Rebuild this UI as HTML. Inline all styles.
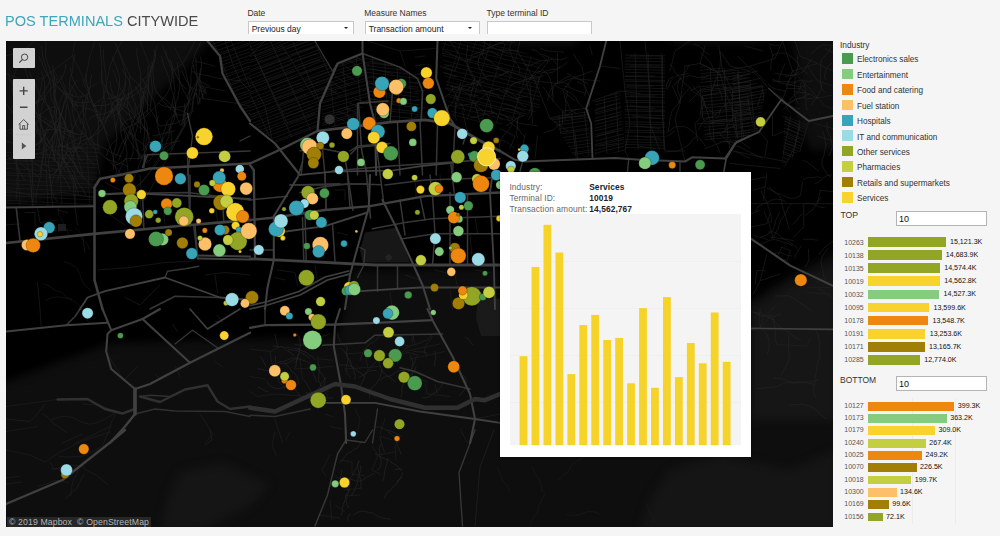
<!DOCTYPE html>
<html><head><meta charset="utf-8">
<style>
html,body{margin:0;padding:0}
body{width:1000px;height:536px;background:#f5f5f5;position:relative;overflow:hidden;font-family:"Liberation Sans",Arial,sans-serif;color:#333}
.abs{position:absolute}
#title{left:5.2px;top:11.5px;font-size:15.5px;line-height:18px;white-space:nowrap;color:#4a4a4a;transform:scaleX(0.94);transform-origin:0 0}
#title span{color:#3fa5ba}
.lbl{font-size:8.5px;line-height:10px;color:#333;white-space:nowrap}
.dd{height:13px;border:1px solid #c8c8c8;border-bottom:none;background:#fff;box-sizing:border-box;font-size:8.5px;line-height:14.6px;padding-left:2.7px;color:#222;white-space:nowrap}
.dd i{position:absolute;right:4.8px;top:5px;width:0;height:0;border-left:2.1px solid transparent;border-right:2.1px solid transparent;border-top:2.5px solid #222}
#map{left:6px;top:41px;width:827px;height:485.6px;background:#0d0d0d;overflow:hidden}
#map svg{position:absolute;left:0;top:0}
.ctl{position:absolute;left:7.3px;width:21.4px;background:#d2d2d2;border-radius:1px}
#attr{position:absolute;left:1px;bottom:0;height:10px;padding:0 2px;background:rgba(60,60,60,.55);color:#b5b5b5;font-size:8.7px;line-height:10px;white-space:nowrap;letter-spacing:.12px}
.sw{position:absolute;left:842px;width:11px;height:10.6px}
.lt{position:absolute;left:857px;margin-top:1.2px;font-size:8.2px;line-height:11px;color:#333;white-space:nowrap}
.inp{position:absolute;left:896px;width:91px;height:14.5px;border:1px solid #b4b4b4;background:#fff;box-sizing:border-box;font-size:9px;line-height:14.6px;padding-left:2px;color:#111}
.bl{position:absolute;left:844.3px;font-size:7px;line-height:9px;color:#555;white-space:nowrap}
.bar{position:absolute;left:868.4px}
.bv{position:absolute;font-size:7.1px;line-height:9px;color:#111;white-space:nowrap}
#tip{left:500px;top:172px;width:251px;height:285px;background:#fff;box-shadow:0 0 2px rgba(0,0,0,.5)}
#tip .r{position:absolute;left:9.4px;font-size:8.4px;letter-spacing:.1px;line-height:10px;color:#666;white-space:nowrap}
#tip .r b{position:absolute;left:79.8px;color:#222}
</style></head><body>
<div id="title" class="abs"><span>POS TERMINALS</span> CITYWIDE</div>
<div class="abs lbl" style="left:247.4px;top:7.6px">Date</div>
<div class="abs dd" style="left:248px;top:21px;width:106px">Previous day<i></i></div>
<div class="abs lbl" style="left:364.2px;top:7.6px">Measure Names</div>
<div class="abs dd" style="left:365px;top:21px;width:115px">Transaction amount<i style="right:7.4px"></i></div>
<div class="abs lbl" style="left:486.5px;top:7.6px">Type terminal ID</div>
<div class="abs dd" style="left:487px;top:21px;width:105px"></div>
<div id="map" class="abs">
<svg width="827" height="486" viewBox="6 41 827 486">
<defs><filter id="bl" filterUnits="userSpaceOnUse" x="-40" y="0" width="920" height="570" color-interpolation-filters="sRGB"><feGaussianBlur stdDeviation="4"/></filter></defs>
<rect x="6" y="41" width="827" height="486" fill="#0e0e0e"/>
<polygon filter="url(#bl)" fill="#000" points="222,30 500,36 505,45 575,45 580,36 670,36 675,44 750,44 790,36 800,75 795,110 810,150 838,150 838,250 790,275 751,300 600,300 500,300 500,268 352,270 337,337 110,343 0,384 0,205 94,190 104,146 160,92"/>
<polygon fill="#171717" points="365,232.5 397.5,227.5 410,262.5 362.5,262.5 360,250"/>
<polygon fill="#242424" points="388.7,253.5 392.7,257.5 388.7,261.5 384.7,257.5"/>
<polygon fill="#1a1a1a" points="478,297 500,299 500,336 481,336 476,318"/>
<circle cx="329.6" cy="119.4" r="5" fill="#333"/>
<rect x="58" y="224" width="8" height="7" fill="#1e1e1e"/>
<polygon filter="url(#bl)" fill="#151515" points="180,472 222,463 269,484 252,505 201,530 160,530 168,497"/>
<polygon filter="url(#bl)" fill="#151515" points="670,470 720,455 790,470 838,450 838,530 640,530 650,500"/>
<polygon filter="url(#bl)" fill="#161616" points="751,310 790,285 838,262 838,420 751,420"/>
<g fill="none" stroke="#232323" stroke-width="0.6"><polyline points="75.0,54.4 73.3,60.2 73.0,66.2 72.4,72.1 70.4,77.8 69.4,83.7 69.7,89.7 70.3,95.7 71.8,101.5 73.1,107.3"/><polyline points="69.4,83.7 72.3,87.7 74.9,92.0 77.1,96.5"/><polyline points="20.8,93.1 24.0,98.2 26.2,103.8 29.0,109.1 32.8,113.7 37.5,117.4 42.6,120.7 47.0,124.7 52.1,127.9 57.0,131.3 61.6,135.1 66.5,138.6"/><polyline points="42.6,120.7 47.0,123.0 51.0,126.0 55.1,128.8 59.7,130.9 64.1,133.3 68.5,135.5 73.3,137.0"/><polyline points="172.4,103.2 174.2,109.0 175.9,114.7 178.1,120.3 180.5,125.8"/><polyline points="175.9,114.7 171.5,117.0 168.0,120.7 166.0,125.2 164.8,130.1 162.9,134.7 162.6,139.7 161.5,144.5"/><polyline points="72.1,92.4 72.1,98.4 72.4,104.4 72.2,110.4 73.5,116.3 75.0,122.1 77.6,127.5 81.2,132.3 85.9,136.0 90.0,140.4 94.9,143.9 100.3,146.6 105.8,149.0 110.6,152.5 116.2,154.7 121.8,156.8"/><polyline points="85.9,136.0 81.1,137.2 76.5,139.3 72.1,141.7 68.0,144.5 63.3,146.0 58.3,145.7"/><polyline points="39.2,56.7 41.9,62.1 43.5,67.8 46.2,73.2 49.4,78.3 53.6,82.5 57.7,86.9 61.6,91.5 65.9,95.7 70.9,99.0 75.2,103.1 78.4,108.2"/><polyline points="57.7,86.9 61.5,90.2 65.6,93.1 70.3,94.7 74.9,96.7 79.9,97.1 84.7,95.7 89.1,93.3"/><polyline points="41.6,71.3 43.2,77.0 44.7,82.8 44.8,88.8 44.4,94.8 45.5,100.7 47.5,106.4 49.9,111.9 51.9,117.5"/><polyline points="44.4,94.8 41.8,99.1 38.0,102.4 33.3,104.1 28.6,105.9 24.0,107.7 20.2,111.0"/><polyline points="29.2,71.5 31.2,77.1 34.7,82.0 36.9,87.6 39.0,93.2 42.1,98.3 45.1,103.5 49.4,107.7 53.6,112.0 56.5,117.3 58.3,123.0 59.5,128.9 61.4,134.6 63.8,140.1 67.1,145.1 69.6,150.5 72.1,156.0 73.6,161.8 75.7,167.4 78.7,172.6"/><polyline points="58.3,123.0 61.9,126.5 66.1,129.2 70.3,131.9 74.8,134.1 79.8,134.5 84.5,133.1"/><polyline points="65.8,64.1 65.2,70.0 63.2,75.7 59.7,80.5 55.0,84.4 50.7,88.5 47.1,93.3 44.3,98.6 42.4,104.3 41.4,110.2 40.1,116.1 37.5,121.5 33.9,126.3 30.3,131.1"/><polyline points="44.3,98.6 39.5,100.2 35.5,103.1 31.7,106.4"/><polyline points="155.3,58.7 152.8,64.2 150.8,69.8 147.8,75.1 143.6,79.4 139.7,83.9 136.0,88.6 131.3,92.3 126.1,95.4 121.6,99.3 118.0,104.2 115.4,109.6 111.7,114.3 107.2,118.2 103.6,123.0"/><polyline points="131.3,92.3 128.4,96.4 125.3,100.4 124.0,105.2 121.5,109.5 118.3,113.4"/><polyline points="29.3,107.7 29.7,113.7 31.1,119.5 33.2,125.1 36.0,130.4 39.6,135.3 42.9,140.3 46.8,144.8 51.0,149.1 55.9,152.5 60.0,156.9 64.4,161.0"/><polyline points="42.9,140.3 39.2,143.6 34.6,145.6 30.0,147.5 25.3,149.4 20.7,151.1 17.0,154.5 13.5,158.1"/><polyline points="45.9,41.3 45.9,47.3 45.4,53.3 46.2,59.3 48.5,64.8 50.1,70.6 51.7,76.4 53.3,82.2 54.0,88.1 53.4,94.1 54.3,100.0"/><polyline points="50.1,70.6 53.2,74.6 56.1,78.7 58.0,83.3"/><polyline points="196.9,80.4 196.1,86.4 196.2,92.4 197.2,98.3 198.1,104.2"/><polyline points="196.2,92.4 193.9,96.8 192.6,101.6 192.1,106.6 193.2,111.5"/><polyline points="168.8,124.6 169.4,130.6 168.7,136.5 166.5,142.1 165.2,148.0 149.3,172.8 145.5,177.5 141.9,182.3 138.3,187.1 135.1,192.2"/><polyline points="99.2,42.6 100.6,48.4 100.4,54.4 101.5,60.3 101.3,66.3 101.9,72.3 101.3,78.3 102.1,84.2 103.6,90.0 103.8,96.0 105.1,101.9 105.5,107.9 104.8,113.8 103.0,119.5 100.6,125.1 97.0,129.8 93.5,134.7 90.0,139.6"/><polyline points="103.8,96.0 100.5,99.7 96.3,102.5 93.0,106.2"/><polyline points="193.3,64.9 194.3,70.8 196.7,76.4 197.9,82.2 200.5,87.7 201.9,93.5 203.5,99.3"/><polyline points="197.9,82.2 194.0,85.4 190.8,89.2 189.0,93.9"/><polyline points="41.4,45.5 42.2,51.4 43.0,57.4 44.6,63.1 46.5,68.9 47.8,74.7 49.8,80.4 50.9,86.3 50.3,92.2 51.2,98.2 53.7,103.6 56.2,109.1 57.1,115.0"/><polyline points="49.8,80.4 48.2,85.1 45.4,89.2 42.9,93.5 40.4,97.9 36.8,101.4 33.5,105.1"/><polyline points="112.9,102.2 111.9,108.1 109.6,113.7 106.7,118.9 104.9,124.6 101.6,129.6 97.0,133.6 91.9,136.6 87.7,140.9 83.2,144.9 78.0,147.9 72.9,151.1 68.8,155.4 64.2,159.3"/><polyline points="91.9,136.6 87.4,138.9 82.7,140.4 78.8,143.6 75.8,147.6 73.6,152.1"/><polyline points="8.7,73.4 10.1,79.3 12.8,84.6 14.4,90.4 16.9,95.9 20.2,100.8 24.1,105.4 28.9,109.0 34.1,112.0 39.0,115.4 44.4,118.1 49.2,121.6 54.8,123.9 59.8,127.2 65.4,129.4 70.9,131.8 76.5,133.9"/><polyline points="34.1,112.0 32.4,116.7 29.1,120.5 24.9,123.2 21.6,126.9"/><polyline points="192.8,110.8 144.9,199.8 139.0,200.8 133.0,201.2"/><polyline points="151.5,61.5 153.0,67.3 153.0,73.3 153.4,79.3 153.9,85.2 155.9,90.9 159.4,95.8 162.7,100.8 166.7,105.2 171.3,109.1 176.0,112.9"/><polyline points="155.9,90.9 158.9,94.9 162.9,97.8 167.0,100.8 170.3,104.5 173.8,108.1 176.2,112.4 177.4,117.3"/><polyline points="56.6,108.3 56.1,114.3 55.7,120.3 55.6,126.3 55.7,132.3 55.1,138.3 53.6,144.1 51.7,149.8 49.4,155.3 48.5,161.2 48.7,167.2 49.8,173.1 50.0,179.1 50.9,185.1 51.6,191.0 53.8,196.6 57.4,201.4"/><polyline points="49.4,155.3 52.8,159.0 56.7,162.1 60.7,165.0 64.1,168.8 65.7,173.5"/><polyline points="121.7,68.7 124.8,73.8 128.2,78.8 130.5,84.3 131.4,90.3 132.4,96.2 134.1,101.9 136.8,107.3 138.1,113.2 140.3,118.8 142.2,124.4 145.2,129.6 148.2,134.8 149.8,140.6 152.5,146.0 154.2,151.7"/><polyline points="138.1,113.2 134.4,116.6 129.9,118.7 125.4,120.9 122.0,124.5 120.3,129.2"/><polyline points="109.8,81.1 110.9,87.0 112.4,92.8 115.1,98.2 118.3,103.3 122.0,108.0 126.1,112.4 130.4,116.5 133.6,121.6 137.6,126.1 142.7,129.3"/><polyline points="122.0,108.0 119.3,112.2 115.2,115.1 110.9,117.6"/><polyline points="82.7,79.1 84.3,84.9 87.4,90.0 89.9,95.5 92.1,101.1 95.3,106.1 97.0,111.9 99.0,117.6 101.5,123.0"/><polyline points="92.1,101.1 87.3,102.5 82.3,102.7 77.3,102.4 72.7,100.5 69.0,97.1 65.5,93.6"/><polyline points="157.0,45.4 155.6,51.2 155.5,57.2 154.1,63.1 152.7,68.9 150.1,74.3 147.3,79.6 145.6,85.4 144.1,91.2 143.3,97.1 143.4,103.1 142.6,109.1 141.4,115.0 140.4,120.9 140.4,126.9 140.4,132.9"/><polyline points="144.1,91.2 142.9,96.1 141.8,100.9 139.5,105.4 137.0,109.7"/><polyline points="101.8,70.6 101.9,76.6 103.0,82.5 105.5,88.0 108.4,93.2 112.5,97.7 117.1,101.5 122.2,104.6 127.2,107.9 131.4,112.3 134.9,117.1 138.6,121.8 142.6,126.3 146.5,130.9 150.7,135.1"/><polyline points="122.2,104.6 118.7,108.2 114.2,110.2 110.4,113.5 106.7,116.8 102.6,119.7 97.9,121.3"/><polyline points="52.7,65.1 53.3,71.1 54.1,77.0 55.5,82.9 55.8,88.9 54.7,94.7 54.7,100.7 55.0,106.7 54.4,112.7 52.8,118.5 49.8,123.7 46.8,128.9 45.1,134.6 42.1,139.8 37.9,144.1"/><polyline points="55.0,106.7 50.2,108.0 45.7,110.3 42.1,113.8 37.5,115.7"/><polyline points="30.5,114.5 28.4,120.1 27.6,126.0 26.0,131.8 25.9,137.8 27.1,143.7 28.1,149.6 30.6,155.0 32.4,160.8 32.7,166.8 32.5,172.8 32.3,178.8 32.2,184.8 31.3,190.7 31.7,196.7 32.8,202.6"/><polyline points="32.4,160.8 27.4,161.3 22.4,161.2 17.7,159.7 12.9,158.2 7.9,157.8"/><polyline points="59.1,126.5 59.8,132.5 61.4,138.2 61.8,144.2 61.7,150.2 62.9,156.1 65.1,161.7 67.5,167.2 70.2,172.5 73.0,177.8 75.2,183.4 76.7,189.2 78.7,194.9"/><polyline points="65.1,161.7 61.5,165.1 57.8,168.6 55.1,172.8 51.0,175.6 47.4,179.1"/><polyline points="177.7,61.5 177.6,67.5 178.8,73.4 179.5,79.4 179.9,85.4 179.0,91.3 178.1,97.2 175.9,102.8 175.1,108.7 174.0,114.6 171.6,120.1 170.5,126.0 171.1,132.0 171.4,138.0 171.9,144.0 171.8,150.0"/><polyline points="175.1,108.7 179.9,110.1 184.6,111.9 189.1,113.9"/><polyline points="158.2,115.7 157.2,121.6 158.0,127.6 159.4,133.4 161.4,139.1 161.8,145.0 163.5,150.8"/><polyline points="159.4,133.4 155.8,136.8 152.3,140.4 148.4,143.5 145.2,147.4 141.7,150.9"/><polyline points="91.8,74.4 90.5,80.3 90.1,86.3 88.8,92.1 86.3,97.6 84.3,103.2 83.0,109.1 80.2,114.4 77.1,119.6 74.8,125.1 71.7,130.3 69.3,135.7 67.5,141.5 67.4,147.5 66.4,153.4 64.1,158.9 61.3,164.3 57.4,168.8 54.7,174.1 52.9,179.9 51.2,185.6"/><polyline points="71.7,130.3 66.9,131.6 61.9,131.3 57.2,129.7 52.2,129.6 47.2,129.5 42.5,131.3"/><polyline points="200.7,68.0 199.6,73.9 199.0,79.9 199.0,85.9 199.5,91.8 199.0,97.8 200.0,103.7"/><polyline points="199.0,85.9 203.0,88.8 205.6,93.1"/><polyline points="111.2,104.2 112.6,110.0 114.2,115.8 114.5,121.8 115.6,127.7 116.7,133.6 116.8,139.6 116.0,145.5 114.3,151.3 113.3,157.2 113.1,163.2 113.6,169.2"/><polyline points="116.8,139.6 112.9,142.7 109.9,146.7 107.8,151.3 106.5,156.1"/><polyline points="195.9,57.8 196.0,63.8 196.2,69.7 197.2,75.7 197.2,81.7 196.7,87.6 194.6,93.3 193.8,99.2 193.1,105.2 191.3,110.9 188.5,116.2 184.5,120.7 181.8,126.0"/><polyline points="194.6,93.3 192.7,97.9 189.3,101.5 185.5,104.8"/><polyline points="200.5,74.1 198.7,79.8 196.0,85.2 192.8,90.3 191.1,96.0 189.0,101.6 186.2,107.0 183.9,112.5 183.1,118.5 182.9,124.5"/><polyline points="189.0,101.6 186.6,106.1 184.9,110.8 184.4,115.7 182.7,120.4 180.9,125.1"/><polyline points="21.1,50.0 22.7,55.8 24.1,61.6 25.1,67.5 26.4,73.4 28.5,79.0 28.9,85.0 28.8,91.0 28.9,97.0 30.6,102.8 31.4,108.7 31.0,114.7 30.8,120.7 32.3,126.5 32.8,132.5 32.4,138.5 31.4,144.4"/><polyline points="28.9,97.0 24.1,98.4 19.4,100.0 15.3,102.9 12.3,106.9"/><polyline points="26.7,92.4 28.4,98.2 31.6,103.3 34.6,108.5 37.2,113.9 38.5,119.7 41.1,125.1 43.3,130.7 45.9,136.1 48.5,141.5 52.2,146.3 56.3,150.6 60.5,155.0 63.4,160.2 67.5,164.6 71.5,169.0 74.8,174.1 76.6,179.8 79.4,185.1 83.2,189.7 85.8,195.2"/><polyline points="52.2,146.3 47.9,148.9 43.8,151.8 39.1,153.3 34.2,154.4 29.2,154.1 24.3,155.2 19.3,155.2"/><polyline points="54.0,77.0 53.6,83.0 54.1,89.0 55.0,94.9 55.9,100.8 57.1,106.7 59.5,112.2 62.7,117.3 65.2,122.7 66.4,128.6 69.1,134.0 71.6,139.4 73.3,145.2 76.4,150.3 78.5,155.9 81.8,161.0"/><polyline points="65.2,122.7 61.1,125.7 57.5,129.2 54.7,133.3 52.3,137.7 50.4,142.3"/><polyline points="112.2,56.9 114.4,62.5 116.7,68.0 118.7,73.7 119.6,79.7 119.3,85.6 118.1,91.5 117.2,97.4 117.7,103.4 118.7,109.3 120.1,115.2 120.6,121.1 121.0,127.1 120.9,133.1 122.3,139.0 124.9,144.4"/><polyline points="117.7,103.4 114.7,107.5 111.0,110.8 106.5,112.9 101.7,114.4 96.7,114.7 92.2,116.9 88.7,120.5"/><polyline points="135.1,102.6 135.1,108.6 135.2,114.6 133.7,120.5 130.9,125.8 129.2,131.5 126.6,136.9 122.7,141.5 120.1,146.9 117.9,152.5 115.0,157.7"/><polyline points="129.2,131.5 133.1,134.7 136.0,138.8 139.9,141.9 143.8,145.0 146.5,149.2"/><polyline points="112.7,69.4 115.0,75.0 116.7,80.7 119.2,86.2 122.2,91.4 125.6,96.3 128.1,101.8 131.2,106.9 133.6,112.4 137.3,117.1 140.0,122.5"/><polyline points="125.6,96.3 121.4,99.1 116.6,100.4 112.1,102.7 107.6,104.8 102.7,105.6 97.7,105.4 92.7,105.8"/><polyline points="85.8,73.8 86.4,79.8 87.2,85.8 89.0,91.5 90.1,97.4 92.6,102.8 94.0,108.6 96.3,114.2 98.1,119.9 98.4,125.9 98.3,131.9 97.7,137.9 97.8,143.9 99.4,149.6"/><polyline points="96.3,114.2 98.9,118.5 101.7,122.6 104.4,126.8 105.8,131.6 108.4,135.8"/><polyline points="55.0,99.1 56.8,104.9 59.2,110.4 61.5,115.9 63.7,121.5 66.1,127.0 69.2,132.1 73.2,136.6 77.6,140.7"/><polyline points="63.7,121.5 59.6,124.4 56.2,128.1 54.0,132.6"/><polyline points="27.8,97.8 27.0,103.7 25.2,109.5 22.0,114.5 20.1,120.2 17.3,125.5 13.3,130.0 9.1,134.3"/><polyline points="20.1,120.2 22.8,124.4 25.0,128.9 26.7,133.6 28.7,138.2"/><polyline points="134.9,86.3 138.1,91.4 140.1,97.0 141.2,102.9 141.6,108.9 143.5,114.6 144.4,120.5 144.5,126.5 144.6,132.5 144.0,138.5 143.5,144.4 143.9,150.4 145.6,156.2 148.2,161.6"/><polyline points="144.5,126.5 146.9,130.8 148.7,135.5 148.9,140.5 147.2,145.2 146.3,150.1 143.8,154.5 140.1,157.8"/><polyline points="25.7,86.2 25.9,92.2 27.1,98.0 29.5,103.6 30.5,109.5 32.4,115.1 34.8,120.7 36.8,126.3 39.2,131.8 40.5,137.7 40.3,143.7 38.6,149.4"/><polyline points="34.8,120.7 30.7,123.6 26.0,125.3 21.4,127.2 16.5,128.3 11.6,129.1 6.8,130.6"/><polyline points="136.9,47.9 136.7,53.9 137.9,59.8 138.6,65.8 140.4,71.5 140.7,77.5 140.3,83.5 141.5,89.3 143.8,94.9 145.7,100.6 148.9,105.6"/><polyline points="140.7,77.5 143.8,81.4 145.9,85.9 149.1,89.8"/><polyline points="205.6,88.5 203.6,94.2 200.2,99.1 198.0,104.7"/><polyline points="66.5,104.7 66.1,110.7 65.5,116.7 64.8,122.6 64.9,128.6 64.2,134.6 62.5,140.3 62.4,146.3 62.2,152.3 63.4,158.2 64.7,164.1 67.4,169.5 69.8,174.9 71.7,180.6"/><polyline points="62.4,146.3 66.9,148.6 71.9,148.9 76.8,148.0 81.8,148.2 86.4,150.2"/><polyline points="161.6,56.1 162.7,62.0 164.6,67.7 167.1,73.1 169.1,78.8 170.5,84.6 171.8,90.5 173.9,96.1 175.2,102.0 175.4,108.0 175.2,114.0 174.3,119.9 171.8,125.3 168.7,130.5 165.2,135.4 162.2,140.6 160.1,146.2 156.5,151.0 149.6,160.7 144.5,163.8"/><polyline points="175.2,114.0 180.0,115.2 185.0,115.0 189.8,113.5"/><polyline points="70.5,67.5 71.0,73.4 72.8,79.2 75.5,84.5 78.5,89.7 82.8,93.9 87.3,97.9 91.1,102.6 94.3,107.6 97.6,112.7"/><polyline points="82.8,93.9 80.0,98.1 76.5,101.7 74.7,106.3 73.8,111.3"/><polyline points="184.5,103.4 184.4,109.4 185.3,115.3 185.3,121.3 184.1,127.2 171.5,147.3 167.0,151.2 148.2,174.4 144.5,179.1 140.2,183.3 135.7,187.2 131.7,191.7"/><polyline points="200.6,57.3 201.5,63.2 201.4,69.2 199.9,75.0 199.8,81.0 200.4,87.0 202.0,92.8 202.9,98.7"/><polyline points="199.8,81.0 202.4,85.3 204.6,89.8 206.3,94.5"/><polyline points="60.3,75.0 62.3,80.6 64.7,86.1 66.3,91.9 68.5,97.5 71.4,102.8 75.0,107.5 78.0,112.7 79.6,118.5 81.2,124.3"/><polyline points="71.4,102.8 75.9,104.9 80.8,105.8 85.2,108.3 90.1,109.1 94.7,111.1 99.6,112.0"/><polyline points="140.9,105.1 140.1,111.1 138.8,116.9 136.5,122.5 133.3,127.5 130.1,132.6 127.6,138.1 124.9,143.4 123.4,149.2 120.8,154.7 118.7,160.3"/><polyline points="130.1,132.6 132.6,137.0 133.2,142.0 133.1,147.0 133.1,152.0 131.8,156.8 129.5,161.2"/><polyline points="82.1,99.2 83.1,105.2 83.6,111.1 83.6,117.1 84.1,123.1 83.1,129.0 81.0,134.6 80.3,140.6 78.5,146.3 75.5,151.5 71.7,156.2 69.0,161.5 65.3,166.2 61.2,170.6 58.5,176.0 57.3,181.9"/><polyline points="78.5,146.3 82.2,149.8 85.5,153.5 87.8,158.0 91.0,161.7 94.4,165.4"/><polyline points="170.5,59.6 172.0,65.4 172.2,71.4 172.0,77.4 170.9,83.3 169.3,89.0 166.4,94.3 162.8,99.0 158.3,103.0 154.5,107.7 150.2,111.9 145.9,116.1 141.1,119.6 136.3,123.3 130.9,125.9 125.5,128.4 120.4,131.5"/><polyline points="158.3,103.0 162.5,105.7 167.4,106.8 172.3,107.7 177.2,107.2 182.2,106.7 187.2,106.2"/><polyline points="119.7,117.8 121.8,123.4 123.8,129.1 125.2,134.9 125.4,140.9 126.1,146.9 127.1,152.8 126.5,158.8 127.3,164.7 127.7,170.7 127.6,176.7 129.1,182.5 130.3,188.4 130.8,194.4"/><polyline points="126.5,158.8 122.3,161.5 118.1,164.3 113.3,165.6"/><polyline points="15.0,104.9 15.9,110.9 16.2,116.9 17.0,122.8 16.9,128.8 16.6,134.8 15.0,140.6 14.0,146.5 13.6,152.5 14.0,158.5 15.9,164.1 18.5,169.6 21.5,174.8 24.5,180.0"/><polyline points="47.8,104.5 50.6,109.8 51.9,115.6 53.5,121.4 54.9,127.2 56.7,133.0 58.2,138.8 60.0,144.5 63.0,149.7 67.2,154.0 70.6,158.9 74.1,163.8 76.8,169.2 80.7,173.7 84.6,178.3 88.4,182.9 92.5,187.3 97.4,190.7 102.0,194.7"/><polyline points="67.2,154.0 69.7,158.3 73.3,161.8 76.3,165.8 78.1,170.4 80.2,175.0 83.6,178.7"/><polyline points="200.6,42.2 198.2,47.7 195.5,53.1 193.6,58.8 192.4,64.6 191.4,70.5 191.0,76.5 190.9,82.5 190.2,88.5 188.2,94.1 187.6,100.1"/><polyline points="191.4,70.5 195.4,73.5 198.2,77.6 201.2,81.6 205.5,84.2 210.0,86.4"/><polyline points="125.8,81.1 125.2,87.1 123.8,92.9 121.8,98.6 120.9,104.5 119.2,110.3 118.2,116.2 116.9,122.0 115.7,127.9"/><polyline points="120.9,104.5 116.2,106.2 112.5,109.6 110.4,114.1"/><polyline points="142.7,113.7 145.0,119.3 147.0,124.9 147.6,130.9 147.0,136.9 146.0,142.8 145.6,148.8 143.8,154.5 141.3,159.9 138.8,165.4 137.4,171.2 134.6,176.5 132.9,182.3"/><polyline points="65.9,96.3 64.2,102.1 63.1,108.0 61.6,113.8 58.6,119.0 54.7,123.6 50.5,127.9 46.9,132.6 43.4,137.5 38.9,141.6 34.8,145.9 30.2,149.8 25.4,153.4 20.0,155.8 14.1,157.3 8.6,159.5"/><polyline points="43.4,137.5 45.4,142.1 46.1,147.0 46.5,152.0 47.7,156.9"/><polyline points="184.2,112.8 183.9,118.8 185.1,124.7"/><polyline points="103.2,48.8 103.3,54.8 103.9,60.8 104.3,66.8 105.6,72.6 105.7,78.6 106.5,84.6 107.2,90.5 108.9,96.3 111.5,101.7 115.2,106.4 118.1,111.6 121.6,116.5 124.9,121.5 128.6,126.3 131.5,131.5 133.3,137.3 135.8,142.7 137.1,148.5 138.3,154.4 138.4,160.4"/><polyline points="115.2,106.4 112.4,110.5 109.2,114.4 106.6,118.6"/><polyline points="115.5,42.8 117.5,48.5 119.2,54.2 121.8,59.7 123.4,65.5 125.2,71.2 125.6,77.2 125.1,83.1 123.6,88.9 120.6,94.1 118.3,99.7 117.6,105.6 117.8,111.6 119.1,117.5 121.7,122.9 125.6,127.5 129.4,132.2 132.1,137.5"/><polyline points="120.6,94.1 116.1,96.5 111.5,98.3 106.5,98.5"/><polyline points="154.2,49.0 154.5,55.0 153.3,60.9 151.5,66.6 150.0,72.4 148.8,78.3 148.6,84.3 147.0,90.0 143.8,95.1 141.4,100.6 140.5,106.6 140.5,112.6"/><polyline points="148.6,84.3 144.8,87.5 140.3,89.7 136.9,93.3 132.7,96.0 128.1,98.0 123.3,99.4 118.3,98.9"/><polyline points="19.5,53.9 17.9,59.7 16.9,65.6 15.6,71.4 13.5,77.1 12.7,83.0 12.4,89.0 13.0,95.0 14.8,100.7 16.7,106.4 19.6,111.6 23.2,116.4"/><polyline points="12.4,89.0 16.8,91.4 20.2,95.0 22.6,99.4"/><polyline points="40.5,115.1 41.0,121.1 40.3,127.0 40.7,133.0 41.3,139.0 43.3,144.7 43.8,150.7 43.2,156.6 42.2,162.5 41.3,168.5 40.9,174.5 39.5,180.3 38.2,186.1 36.4,191.9 35.8,197.8 36.2,203.8"/><polyline points="42.2,162.5 46.2,165.4 50.5,168.1 55.3,169.4 60.3,169.9"/><polyline points="181.8,70.8 184.4,76.2 187.2,81.5 190.0,86.8 193.7,91.5 197.5,96.2 200.8,101.1"/><polyline points="190.0,86.8 194.5,88.9 199.2,90.6 204.2,91.1"/><polyline points="26.1,95.2 27.2,101.1 29.5,106.6 31.2,112.4 32.5,118.2 34.8,123.8 37.7,129.0 41.9,133.3 45.6,138.0 49.3,142.8 52.0,148.1 53.4,154.0 54.7,159.8"/><polyline points="37.7,129.0 35.9,133.7 34.4,138.4 32.0,142.8 30.9,147.7 29.2,152.4 28.4,157.3"/><polyline points="124.6,128.7 126.9,134.3 128.9,139.9 132.4,144.8 135.8,149.7 139.4,154.5 143.0,159.4 147.4,163.4"/><polyline points="135.8,149.7 139.2,153.4 143.4,156.2 148.2,157.5"/><polyline points="59.8,113.7 60.4,119.7 60.1,125.7 60.7,131.7 60.1,137.6 59.0,143.6 58.1,149.5 58.0,155.5 58.2,161.5 58.8,167.4"/><polyline points="59.0,143.6 63.5,145.8 68.1,147.9 72.4,150.2"/><polyline points="165.6,50.8 167.1,56.6 169.4,62.2 172.5,67.3 175.1,72.7 177.9,78.0 180.9,83.2 182.6,89.0 185.7,94.1 188.4,99.4 190.6,105.0"/><polyline points="177.9,78.0 180.3,82.4 183.3,86.4 187.1,89.7"/><polyline points="77.4,79.8 73.9,84.7 71.0,89.9 68.4,95.3 65.6,100.6 63.3,106.2 62.2,112.1 60.4,117.8 59.2,123.7 56.8,129.2 53.8,134.4 52.4,140.2 52.3,146.2 53.3,152.2 54.8,158.0 57.3,163.4 59.2,169.1 62.0,174.4 65.0,179.6 68.4,184.6 70.2,190.3"/><polyline points="53.8,134.4 51.4,138.8 48.5,142.8 46.4,147.4"/><polyline points="148.4,65.3 147.9,71.3 148.1,77.3 148.3,83.3 148.7,89.3 147.6,95.2 147.2,101.2 147.5,107.2 147.2,113.2"/><polyline points="148.7,89.3 149.8,94.2 152.4,98.4 154.7,102.9 155.3,107.8 156.2,112.8 157.0,117.7 156.3,122.6"/><polyline points="81.0,117.7 82.7,123.5 85.1,129.0 86.2,134.9 88.3,140.5 91.7,145.4 96.3,149.3 100.8,153.3 105.1,157.5 109.6,161.4 113.9,165.6 118.1,169.9 121.4,174.9 125.1,179.7 128.0,184.9 131.0,190.1 132.4,195.9"/><polyline points="105.1,157.5 109.4,160.0 114.1,161.5 118.8,163.4 123.7,164.4 128.1,166.7"/><polyline points="27.7,117.2 26.7,123.1 25.3,129.0 23.4,134.7 20.9,140.1 18.7,145.7 17.8,151.6 17.1,157.6 16.3,163.5 16.8,169.5 17.6,175.5 16.8,181.4 17.2,187.4 16.3,193.3 16.3,199.3"/><polyline points="17.1,157.6 19.9,161.8 23.2,165.5 27.0,168.7 31.2,171.5 35.3,174.4 39.1,177.6"/></g>
<clipPath id="h1"><polygon points="250.0,41.0 313.8,41.0 333.8,69.8 321.2,101.0 317.5,129.8 277.5,142.2 250.0,122.2"/></clipPath><g clip-path="url(#h1)" stroke="#262626" stroke-width="0.5" fill="none"><path d="M250.0 5.5L333.8 -26.3"/><path d="M250.0 8.3L333.8 -23.6"/><path d="M250.0 12.1L333.8 -19.7"/><path d="M250.0 15.3L333.8 -16.6"/><path d="M250.0 18.5L333.8 -13.4"/><path d="M250.0 22.0L333.8 -9.9"/><path d="M250.0 24.7L333.8 -7.1"/><path d="M250.0 27.5L333.8 -4.3"/><path d="M250.0 30.7L333.8 -1.2"/><path d="M250.0 34.9L333.8 3.1"/><path d="M250.0 38.4L333.8 6.6"/><path d="M250.0 40.1L333.8 8.3"/><path d="M250.0 44.0L333.8 12.2"/><path d="M250.0 47.1L333.8 15.3"/><path d="M250.0 50.3L333.8 18.5"/><path d="M250.0 53.8L333.8 22.0"/><path d="M250.0 56.6L333.8 24.7"/><path d="M250.0 60.4L333.8 28.6"/><path d="M250.0 62.5L333.8 30.7"/><path d="M250.0 66.8L333.8 35.0"/><path d="M250.0 70.3L333.8 38.5"/><path d="M250.0 72.0L333.8 40.1"/><path d="M250.0 75.8L333.8 44.0"/><path d="M250.0 79.0L333.8 47.1"/><path d="M250.0 83.2L333.8 51.4"/><path d="M250.0 85.7L333.8 53.9"/><path d="M250.0 88.4L333.8 56.6"/><path d="M250.0 92.3L333.8 60.5"/><path d="M250.0 94.4L333.8 62.5"/><path d="M250.0 98.6L333.8 66.8"/><path d="M250.0 102.1L333.8 70.3"/><path d="M250.0 104.9L333.8 73.0"/><path d="M250.0 107.7L333.8 75.9"/><path d="M250.0 110.8L333.8 79.0"/><path d="M250.0 115.1L333.8 83.3"/><path d="M250.0 117.5L333.8 85.7"/><path d="M250.0 120.3L333.8 88.4"/><path d="M250.0 124.1L333.8 92.3"/><path d="M250.0 127.3L333.8 95.4"/><path d="M250.0 130.5L333.8 98.7"/><path d="M250.0 134.0L333.8 102.2"/><path d="M250.0 136.7L333.8 104.9"/><path d="M250.0 139.5L333.8 107.7"/><path d="M250.0 142.7L333.8 110.8"/><path d="M250.0 146.9L333.8 115.1"/><path d="M250.0 150.4L333.8 118.6"/><path d="M250.0 152.1L333.8 120.3"/><path d="M250.0 156.0L333.8 124.2"/><path d="M250.0 159.1L333.8 127.3"/><path d="M250.0 162.3L333.8 130.5"/><path d="M250.0 165.8L333.8 134.0"/><path d="M250.0 168.6L333.8 136.7"/><path d="M250.0 172.4L333.8 140.6"/><path d="M250.0 174.5L333.8 142.7"/><path d="M204.4 41.0L250.0 142.2"/><path d="M226.4 41.0L272.0 142.2"/><path d="M248.4 41.0L294.0 142.2"/><path d="M270.4 41.0L316.0 142.2"/><path d="M292.4 41.0L338.0 142.2"/><path d="M314.4 41.0L360.0 142.2"/><path d="M336.4 41.0L382.0 142.2"/><path d="M358.4 41.0L404.0 142.2"/></g>
<clipPath id="h2"><polygon points="337.5,64.8 361.2,54.8 368.8,103.5 357.5,103.5 357.5,123.5 322.5,128.5 321.2,103.5"/></clipPath><g clip-path="url(#h2)" stroke="#262626" stroke-width="0.5" fill="none"><path d="M321.2 36.8L368.8 22.6"/><path d="M321.2 39.6L368.8 25.3"/><path d="M321.2 43.5L368.8 29.2"/><path d="M321.2 46.6L368.8 32.3"/><path d="M321.2 49.8L368.8 35.6"/><path d="M321.2 53.3L368.8 39.1"/><path d="M321.2 56.0L368.8 41.8"/><path d="M321.2 58.9L368.8 44.6"/><path d="M321.2 62.0L368.8 47.7"/><path d="M321.2 66.3L368.8 52.0"/><path d="M321.2 69.8L368.8 55.5"/><path d="M321.2 71.4L368.8 57.2"/><path d="M321.2 75.3L368.8 61.1"/><path d="M321.2 78.4L368.8 64.2"/><path d="M321.2 81.7L368.8 67.4"/><path d="M321.2 85.2L368.8 70.9"/><path d="M321.2 87.9L368.8 73.6"/><path d="M321.2 91.8L368.8 77.5"/><path d="M321.2 93.8L368.8 79.6"/><path d="M321.2 98.1L368.8 83.9"/><path d="M321.2 101.6L368.8 87.4"/><path d="M321.2 103.3L368.8 89.0"/><path d="M321.2 107.2L368.8 92.9"/><path d="M321.2 110.3L368.8 96.0"/><path d="M321.2 114.6L368.8 100.3"/><path d="M321.2 117.0L368.8 102.8"/><path d="M321.2 119.7L368.8 105.5"/><path d="M321.2 123.6L368.8 109.4"/><path d="M321.2 125.7L368.8 111.4"/><path d="M321.2 130.0L368.8 115.7"/><path d="M321.2 133.5L368.8 119.2"/><path d="M321.2 136.2L368.8 121.9"/><path d="M321.2 139.0L368.8 124.8"/><path d="M321.2 142.1L368.8 127.9"/><path d="M313.9 54.8L321.2 128.5"/><path d="M327.9 54.8L335.2 128.5"/><path d="M341.9 54.8L349.2 128.5"/><path d="M355.9 54.8L363.2 128.5"/><path d="M369.9 54.8L377.2 128.5"/></g>
<clipPath id="h3"><polygon points="363.8,54.8 400.0,68.5 417.5,79.8 421.2,118.5 375.0,122.2 370.0,103.5"/></clipPath><g clip-path="url(#h3)" stroke="#262626" stroke-width="0.5" fill="none"><path d="M363.8 43.8L421.2 50.7"/><path d="M363.8 46.8L421.2 53.7"/><path d="M363.8 51.2L421.2 58.1"/><path d="M363.8 54.6L421.2 61.5"/><path d="M363.8 58.4L421.2 65.2"/><path d="M363.8 62.2L421.2 69.2"/><path d="M363.8 65.3L421.2 72.2"/><path d="M363.8 68.6L421.2 75.5"/><path d="M363.8 72.0L421.2 78.9"/><path d="M363.8 76.8L421.2 83.7"/><path d="M363.8 80.7L421.2 87.6"/><path d="M363.8 82.7L421.2 89.6"/><path d="M363.8 87.0L421.2 93.9"/><path d="M363.8 90.5L421.2 97.4"/><path d="M363.8 94.2L421.2 101.1"/><path d="M363.8 98.1L421.2 105.0"/><path d="M363.8 101.1L421.2 108.0"/><path d="M363.8 105.5L421.2 112.4"/><path d="M363.8 107.9L421.2 114.8"/><path d="M363.8 112.7L421.2 119.6"/><path d="M363.8 116.5L421.2 123.5"/><path d="M363.8 118.5L421.2 125.4"/><path d="M363.8 122.9L421.2 129.8"/><path d="M363.8 126.3L421.2 133.2"/><path d="M363.8 131.1L421.2 138.0"/><path d="M360.4 54.8L363.8 122.2"/><path d="M372.4 54.8L375.8 122.2"/><path d="M384.4 54.8L387.8 122.2"/><path d="M396.4 54.8L399.8 122.2"/><path d="M408.4 54.8L411.8 122.2"/><path d="M420.4 54.8L423.8 122.2"/></g>
<clipPath id="h4"><polygon points="208.0,41.0 250.0,41.0 250.0,118.0 240.0,104.0 224.0,73.0 220.0,53.0"/></clipPath><g clip-path="url(#h4)" stroke="#262626" stroke-width="0.5" fill="none"><path d="M208.0 22.5L250.0 7.8"/><path d="M208.0 25.3L250.0 10.6"/><path d="M208.0 29.4L250.0 14.7"/><path d="M208.0 32.7L250.0 18.0"/><path d="M208.0 36.2L250.0 21.5"/><path d="M208.0 39.9L250.0 25.2"/><path d="M208.0 42.8L250.0 28.1"/><path d="M208.0 45.8L250.0 31.1"/><path d="M208.0 49.1L250.0 34.4"/><path d="M208.0 53.6L250.0 39.0"/><path d="M208.0 57.4L250.0 42.7"/><path d="M208.0 59.2L250.0 44.5"/><path d="M208.0 63.3L250.0 48.6"/><path d="M208.0 66.6L250.0 51.9"/><path d="M208.0 70.0L250.0 55.3"/><path d="M208.0 73.8L250.0 59.0"/><path d="M208.0 76.6L250.0 61.9"/><path d="M208.0 80.7L250.0 66.0"/><path d="M208.0 83.0L250.0 68.3"/><path d="M208.0 87.5L250.0 72.8"/><path d="M208.0 91.2L250.0 76.5"/><path d="M208.0 93.0L250.0 78.3"/><path d="M208.0 97.1L250.0 82.4"/><path d="M208.0 100.4L250.0 85.7"/><path d="M208.0 105.0L250.0 90.3"/><path d="M208.0 107.6L250.0 92.9"/><path d="M208.0 110.5L250.0 95.8"/><path d="M208.0 114.6L250.0 99.9"/><path d="M208.0 116.8L250.0 102.1"/><path d="M208.0 121.4L250.0 106.7"/><path d="M208.0 125.1L250.0 110.4"/><path d="M208.0 127.9L250.0 113.2"/><path d="M208.0 131.0L250.0 116.3"/><path d="M208.0 134.3L250.0 119.6"/><path d="M177.2 41.0L208.0 118.0"/><path d="M195.2 41.0L226.0 118.0"/><path d="M213.2 41.0L244.0 118.0"/><path d="M231.2 41.0L262.0 118.0"/><path d="M249.2 41.0L280.0 118.0"/><path d="M267.2 41.0L298.0 118.0"/></g>
<clipPath id="h5"><polygon points="625.0,53.0 665.0,53.0 665.0,150.0 625.0,150.0"/></clipPath><g clip-path="url(#h5)" stroke="#262626" stroke-width="0.5" fill="none"><path d="M625.0 48.8L665.0 49.5"/><path d="M625.0 51.3L665.0 52.1"/><path d="M625.0 55.0L665.0 55.8"/><path d="M625.0 57.9L665.0 58.7"/><path d="M625.0 60.9L665.0 61.7"/><path d="M625.0 64.2L665.0 65.0"/><path d="M625.0 66.8L665.0 67.6"/><path d="M625.0 69.4L665.0 70.2"/><path d="M625.0 72.3L665.0 73.1"/><path d="M625.0 76.4L665.0 77.2"/><path d="M625.0 79.7L665.0 80.5"/><path d="M625.0 81.2L665.0 82.0"/><path d="M625.0 84.8L665.0 85.6"/><path d="M625.0 87.8L665.0 88.6"/><path d="M625.0 90.8L665.0 91.5"/><path d="M625.0 94.0L665.0 94.8"/><path d="M625.0 96.6L665.0 97.4"/><path d="M625.0 100.3L665.0 101.1"/><path d="M625.0 102.2L665.0 103.0"/><path d="M625.0 106.2L665.0 107.0"/><path d="M625.0 109.5L665.0 110.3"/><path d="M625.0 111.0L665.0 111.8"/><path d="M625.0 114.7L665.0 115.5"/><path d="M625.0 117.6L665.0 118.4"/><path d="M625.0 121.7L665.0 122.5"/><path d="M625.0 123.9L665.0 124.7"/><path d="M625.0 126.5L665.0 127.3"/><path d="M625.0 130.1L665.0 130.9"/><path d="M625.0 132.0L665.0 132.8"/><path d="M625.0 136.0L665.0 136.8"/><path d="M625.0 139.3L665.0 140.2"/><path d="M625.0 141.9L665.0 142.7"/><path d="M625.0 144.5L665.0 145.3"/><path d="M625.0 147.5L665.0 148.3"/><path d="M625.0 151.5L665.0 152.3"/><path d="M622.1 53.0L625.0 150.0"/><path d="M635.1 53.0L638.0 150.0"/><path d="M648.1 53.0L651.0 150.0"/><path d="M661.1 53.0L664.0 150.0"/></g>
<clipPath id="h6"><polygon points="732.0,71.0 767.0,88.0 757.0,131.0 735.0,141.0"/></clipPath><g clip-path="url(#h6)" stroke="#262626" stroke-width="0.5" fill="none"><path d="M732.0 60.5L767.0 53.5"/><path d="M732.0 63.1L767.0 56.1"/><path d="M732.0 66.8L767.0 59.8"/><path d="M732.0 69.7L767.0 62.7"/><path d="M732.0 72.7L767.0 65.7"/><path d="M732.0 76.0L767.0 69.0"/><path d="M732.0 78.6L767.0 71.6"/><path d="M732.0 81.2L767.0 74.2"/><path d="M732.0 84.1L767.0 77.1"/><path d="M732.0 88.2L767.0 81.2"/><path d="M732.0 91.5L767.0 84.5"/><path d="M732.0 93.0L767.0 86.0"/><path d="M732.0 96.6L767.0 89.6"/><path d="M732.0 99.6L767.0 92.6"/><path d="M732.0 102.5L767.0 95.5"/><path d="M732.0 105.8L767.0 98.8"/><path d="M732.0 108.4L767.0 101.4"/><path d="M732.0 112.1L767.0 105.1"/><path d="M732.0 114.0L767.0 107.0"/><path d="M732.0 118.0L767.0 111.0"/><path d="M732.0 121.3L767.0 114.3"/><path d="M732.0 122.8L767.0 115.8"/><path d="M732.0 126.5L767.0 119.5"/><path d="M732.0 129.4L767.0 122.4"/><path d="M732.0 133.4L767.0 126.4"/><path d="M732.0 135.7L767.0 128.7"/><path d="M732.0 138.3L767.0 131.3"/><path d="M732.0 141.9L767.0 134.9"/><path d="M732.0 143.8L767.0 136.8"/><path d="M732.0 147.8L767.0 140.8"/><path d="M725.0 71.0L732.0 141.0"/><path d="M737.0 71.0L744.0 141.0"/><path d="M749.0 71.0L756.0 141.0"/><path d="M761.0 71.0L768.0 141.0"/><path d="M773.0 71.0L780.0 141.0"/></g>
<clipPath id="h7"><polygon points="785.0,113.0 807.0,123.0 800.0,151.0 782.0,166.0"/></clipPath><g clip-path="url(#h7)" stroke="#262626" stroke-width="0.5" fill="none"><path d="M782.0 99.5L807.0 109.5"/><path d="M782.0 102.1L807.0 112.1"/><path d="M782.0 105.8L807.0 115.8"/><path d="M782.0 108.7L807.0 118.7"/><path d="M782.0 111.7L807.0 121.7"/><path d="M782.0 115.0L807.0 125.0"/><path d="M782.0 117.6L807.0 127.6"/><path d="M782.0 120.2L807.0 130.2"/><path d="M782.0 123.1L807.0 133.1"/><path d="M782.0 127.2L807.0 137.2"/><path d="M782.0 130.4L807.0 140.4"/><path d="M782.0 132.0L807.0 142.0"/><path d="M782.0 135.6L807.0 145.6"/><path d="M782.0 138.6L807.0 148.6"/><path d="M782.0 141.6L807.0 151.6"/><path d="M782.0 144.8L807.0 154.8"/><path d="M782.0 147.4L807.0 157.4"/><path d="M782.0 151.1L807.0 161.1"/><path d="M782.0 153.0L807.0 163.0"/><path d="M782.0 157.0L807.0 167.0"/><path d="M782.0 160.3L807.0 170.3"/><path d="M782.0 161.8L807.0 171.8"/><path d="M782.0 165.5L807.0 175.5"/><path d="M782.0 168.4L807.0 178.4"/><path d="M782.0 172.4L807.0 182.4"/><path d="M782.0 174.7L807.0 184.7"/><path d="M782.0 177.3L807.0 187.3"/><path d="M771.4 113.0L760.8 166.0"/><path d="M781.4 113.0L770.8 166.0"/><path d="M791.4 113.0L780.8 166.0"/><path d="M801.4 113.0L790.8 166.0"/><path d="M811.4 113.0L800.8 166.0"/></g>
<clipPath id="h8"><polygon points="550.0,116.0 587.0,111.0 592.0,156.0 575.0,158.0"/></clipPath><g clip-path="url(#h8)" stroke="#262626" stroke-width="0.5" fill="none"><path d="M550.0 101.0L592.0 94.8"/><path d="M550.0 103.8L592.0 97.5"/><path d="M550.0 107.7L592.0 101.4"/><path d="M550.0 110.8L592.0 104.5"/><path d="M550.0 114.0L592.0 107.7"/><path d="M550.0 117.5L592.0 111.2"/><path d="M550.0 120.2L592.0 113.9"/><path d="M550.0 123.1L592.0 116.8"/><path d="M550.0 126.2L592.0 119.9"/><path d="M550.0 130.5L592.0 124.2"/><path d="M550.0 133.9L592.0 127.6"/><path d="M550.0 135.6L592.0 129.3"/><path d="M550.0 139.5L592.0 133.2"/><path d="M550.0 142.6L592.0 136.3"/><path d="M550.0 145.8L592.0 139.5"/><path d="M550.0 149.3L592.0 143.0"/><path d="M550.0 152.1L592.0 145.8"/><path d="M550.0 156.0L592.0 149.7"/><path d="M550.0 158.0L592.0 151.7"/><path d="M550.0 162.3L592.0 156.0"/><path d="M550.0 165.8L592.0 159.5"/><path d="M545.3 111.0L550.0 158.0"/><path d="M558.3 111.0L563.0 158.0"/><path d="M571.3 111.0L576.0 158.0"/><path d="M584.3 111.0L589.0 158.0"/></g>
<clipPath id="h9"><polygon points="595.0,101.0 620.0,91.0 625.0,151.0 595.0,156.0"/></clipPath><g clip-path="url(#h9)" stroke="#262626" stroke-width="0.5" fill="none"><path d="M595.0 79.8L625.0 72.3"/><path d="M595.0 82.6L625.0 75.1"/><path d="M595.0 86.5L625.0 79.0"/><path d="M595.0 89.6L625.0 82.1"/><path d="M595.0 92.8L625.0 85.3"/><path d="M595.0 96.3L625.0 88.8"/><path d="M595.0 99.0L625.0 91.5"/><path d="M595.0 101.9L625.0 94.4"/><path d="M595.0 105.0L625.0 97.5"/><path d="M595.0 109.3L625.0 101.8"/><path d="M595.0 112.8L625.0 105.3"/><path d="M595.0 114.4L625.0 106.9"/><path d="M595.0 118.3L625.0 110.8"/><path d="M595.0 121.4L625.0 113.9"/><path d="M595.0 124.7L625.0 117.2"/><path d="M595.0 128.2L625.0 120.7"/><path d="M595.0 130.9L625.0 123.4"/><path d="M595.0 134.8L625.0 127.3"/><path d="M595.0 136.8L625.0 129.3"/><path d="M595.0 141.1L625.0 133.6"/><path d="M595.0 144.6L625.0 137.1"/><path d="M595.0 146.3L625.0 138.8"/><path d="M595.0 150.2L625.0 142.7"/><path d="M595.0 153.3L625.0 145.8"/><path d="M595.0 157.5L625.0 150.0"/><path d="M595.0 160.0L625.0 152.5"/><path d="M595.0 162.7L625.0 155.2"/><path d="M595.0 166.6L625.0 159.1"/><path d="M591.8 91.0L595.0 156.0"/><path d="M603.8 91.0L607.0 156.0"/><path d="M615.8 91.0L619.0 156.0"/><path d="M627.8 91.0L631.0 156.0"/></g>
<clipPath id="h10"><polygon points="700.0,66.0 750.0,71.0 750.0,136.0 735.0,143.0 705.0,141.0"/></clipPath><g clip-path="url(#h10)" stroke="#262626" stroke-width="0.5" fill="none"><path d="M700.0 57.3L750.0 52.3"/><path d="M700.0 60.1L750.0 55.1"/><path d="M700.0 64.0L750.0 59.0"/><path d="M700.0 67.1L750.0 62.1"/><path d="M700.0 70.3L750.0 65.3"/><path d="M700.0 73.8L750.0 68.8"/><path d="M700.0 76.5L750.0 71.5"/><path d="M700.0 79.4L750.0 74.4"/><path d="M700.0 82.5L750.0 77.5"/><path d="M700.0 86.8L750.0 81.8"/><path d="M700.0 90.3L750.0 85.3"/><path d="M700.0 91.9L750.0 86.9"/><path d="M700.0 95.8L750.0 90.8"/><path d="M700.0 98.9L750.0 93.9"/><path d="M700.0 102.2L750.0 97.2"/><path d="M700.0 105.7L750.0 100.7"/><path d="M700.0 108.4L750.0 103.4"/><path d="M700.0 112.3L750.0 107.3"/><path d="M700.0 114.3L750.0 109.3"/><path d="M700.0 118.6L750.0 113.6"/><path d="M700.0 122.1L750.0 117.1"/><path d="M700.0 123.8L750.0 118.8"/><path d="M700.0 127.7L750.0 122.7"/><path d="M700.0 130.8L750.0 125.8"/><path d="M700.0 135.1L750.0 130.1"/><path d="M700.0 137.5L750.0 132.5"/><path d="M700.0 140.2L750.0 135.2"/><path d="M700.0 144.1L750.0 139.1"/><path d="M700.0 146.2L750.0 141.2"/><path d="M700.0 150.5L750.0 145.5"/><path d="M696.1 66.0L700.0 143.0"/><path d="M710.1 66.0L714.0 143.0"/><path d="M724.1 66.0L728.0 143.0"/><path d="M738.1 66.0L742.0 143.0"/><path d="M752.1 66.0L756.0 143.0"/></g>
<clipPath id="h11"><polygon points="441.0,41.0 500.0,41.0 540.0,60.0 540.0,110.0 500.0,125.0 452.0,118.0 445.0,77.0"/></clipPath><g clip-path="url(#h11)" stroke="#202020" stroke-width="0.5" fill="none"><path d="M441.0 11.8L540.0 36.5"/><path d="M441.0 15.1L540.0 39.9"/><path d="M441.0 19.9L540.0 44.7"/><path d="M441.0 23.7L540.0 48.5"/><path d="M441.0 27.9L540.0 52.7"/><path d="M441.0 32.2L540.0 57.0"/><path d="M441.0 35.6L540.0 60.3"/><path d="M441.0 39.3L540.0 64.1"/><path d="M441.0 43.1L540.0 67.9"/><path d="M441.0 48.4L540.0 73.2"/><path d="M441.0 52.7L540.0 77.5"/><path d="M441.0 55.0L540.0 79.7"/><path d="M441.0 59.8L540.0 84.5"/><path d="M441.0 63.6L540.0 88.3"/><path d="M441.0 67.8L540.0 92.5"/><path d="M441.0 72.1L540.0 96.8"/><path d="M441.0 75.4L540.0 100.2"/><path d="M441.0 80.2L540.0 105.0"/><path d="M441.0 83.0L540.0 107.7"/><path d="M441.0 88.2L540.0 113.0"/><path d="M441.0 92.5L540.0 117.3"/><path d="M441.0 94.8L540.0 119.6"/><path d="M441.0 99.6L540.0 124.4"/><path d="M441.0 103.4L540.0 128.2"/><path d="M441.0 108.7L540.0 133.4"/><path d="M441.0 112.0L540.0 136.7"/><path d="M441.0 115.3L540.0 140.0"/><path d="M441.0 120.1L540.0 144.8"/><path d="M441.0 122.8L540.0 147.6"/><path d="M441.0 128.1L540.0 152.8"/><path d="M441.0 132.4L540.0 157.2"/><path d="M441.0 135.7L540.0 160.5"/><path d="M441.0 139.5L540.0 164.2"/><path d="M441.0 143.3L540.0 168.0"/><path d="M441.0 148.6L540.0 173.3"/><path d="M441.0 151.8L540.0 176.6"/><path d="M415.8 41.0L390.6 125.0"/><path d="M430.8 41.0L405.6 125.0"/><path d="M445.8 41.0L420.6 125.0"/><path d="M460.8 41.0L435.6 125.0"/><path d="M475.8 41.0L450.6 125.0"/><path d="M490.8 41.0L465.6 125.0"/><path d="M505.8 41.0L480.6 125.0"/><path d="M520.8 41.0L495.6 125.0"/><path d="M535.8 41.0L510.6 125.0"/><path d="M550.8 41.0L525.6 125.0"/></g>
<clipPath id="h12"><polygon points="6.0,150.0 100.0,141.0 94.0,205.0 6.0,207.0"/></clipPath><g clip-path="url(#h12)" stroke="#222" stroke-width="0.5" fill="none"><path d="M6.0 131.9L100.0 136.6"/><path d="M6.0 135.2L100.0 139.9"/><path d="M6.0 140.0L100.0 144.7"/><path d="M6.0 143.8L100.0 148.5"/><path d="M6.0 148.0L100.0 152.7"/><path d="M6.0 152.3L100.0 157.0"/><path d="M6.0 155.6L100.0 160.3"/><path d="M6.0 159.4L100.0 164.1"/><path d="M6.0 163.2L100.0 167.9"/><path d="M6.0 168.5L100.0 173.2"/><path d="M6.0 172.8L100.0 177.4"/><path d="M6.0 175.0L100.0 179.7"/><path d="M6.0 179.8L100.0 184.5"/><path d="M6.0 183.6L100.0 188.3"/><path d="M6.0 187.9L100.0 192.6"/><path d="M6.0 192.2L100.0 196.8"/><path d="M6.0 195.5L100.0 200.2"/><path d="M6.0 200.3L100.0 205.0"/><path d="M6.0 203.0L100.0 207.7"/><path d="M6.0 208.3L100.0 213.0"/><path d="M6.0 212.6L100.0 217.3"/><path d="M6.0 214.9L100.0 219.6"/><path d="M2.7 141.0L6.0 207.0"/><path d="M16.7 141.0L20.0 207.0"/><path d="M30.7 141.0L34.0 207.0"/><path d="M44.7 141.0L48.0 207.0"/><path d="M58.7 141.0L62.0 207.0"/><path d="M72.7 141.0L76.0 207.0"/><path d="M86.7 141.0L90.0 207.0"/><path d="M100.7 141.0L104.0 207.0"/></g>
<g fill="none" stroke="#242424" stroke-width="0.55"><polyline points="510.6,85.4 514.9,82.9 519.9,82.1 524.3,79.8 529.2,78.9 534.1,77.9 539.1,77.5 543.7,75.5"/><polyline points="509.8,54.5 505.1,52.6 500.7,50.4 496.0,48.6 491.3,47.0 487.0,44.3 483.2,41.1"/><polyline points="589.4,106.2 589.3,101.2 589.4,96.2 587.1,91.7 585.2,87.1 581.6,83.6 577.0,81.7"/><polyline points="487.2,48.9 491.8,47.0 495.7,43.9 500.5,42.5 505.3,41.0 510.2,41.9 515.2,42.3"/><polyline points="484.1,50.4 480.6,54.0 478.7,58.6 478.0,63.6 479.3,68.4 482.5,72.2 484.4,76.8 487.7,80.6"/><polyline points="526.1,77.1 526.6,82.1 527.5,87.0 529.0,91.8 531.0,96.4 530.6,101.4 532.6,105.9 532.8,110.9 530.8,115.5 528.3,119.8"/><polyline points="589.7,45.5 591.1,50.2 592.2,55.1"/><polyline points="475.3,91.1 480.3,91.0 485.2,90.6 489.9,92.4 494.6,94.2 499.1,96.3 502.5,100.0"/><polyline points="471.5,55.4 476.0,53.2 480.8,52.0 485.0,49.2 489.5,47.0 494.1,45.1 499.0,44.1 503.8,42.5"/><polyline points="460.8,81.9 459.6,86.8 459.7,91.8 458.1,96.5 456.1,101.1 455.1,106.0 455.6,111.0 455.1,115.9 456.7,120.7"/><polyline points="526.1,107.1 521.6,105.0 518.2,101.2 516.0,96.8 512.0,93.7 507.8,91.0 503.1,89.4"/><polyline points="451.8,64.9 446.9,65.9 442.7,68.6"/><polyline points="520.7,114.1 516.4,111.5 511.8,109.6 506.9,108.5 502.1,109.8"/><polyline points="531.8,49.5 536.6,50.7 540.3,54.1 545.1,55.7 549.7,57.4 553.9,60.3 556.6,64.5"/><polyline points="551.9,96.1 552.5,91.1 554.0,86.3 557.3,82.6 561.7,80.2 565.9,77.5 570.7,76.1"/><polyline points="570.2,86.4 566.3,83.3 561.3,82.4 556.5,83.7 552.6,86.7 550.0,91.1 548.6,95.9 547.7,100.8"/><polyline points="492.9,113.1 490.9,108.5 490.5,103.6 488.2,99.1 487.0,94.3 483.7,90.5 480.9,86.4 478.0,82.3"/><polyline points="478.4,95.7 473.4,95.0 468.5,94.3 464.1,91.8 459.5,89.9 454.5,89.7 449.6,89.0 444.7,88.1"/><polyline points="494.7,112.8 489.8,113.8 484.8,113.8 480.0,115.4 475.4,117.3 470.4,117.7"/><polyline points="577.6,109.1 572.8,110.6 568.7,113.4 565.8,117.5"/><polyline points="564.2,52.3 559.2,51.6 554.2,51.4 549.2,51.2 544.4,50.0 539.8,47.9"/><polyline points="567.1,90.2 567.2,95.2 565.5,99.9 566.1,104.9 565.6,109.9 564.8,114.8 564.9,119.8"/><polyline points="448.6,105.4 447.5,110.3 444.3,114.1 442.7,118.8"/><polyline points="537.8,71.3 542.7,72.2 547.6,73.0 552.6,72.3 556.6,69.2 560.5,66.1"/><polyline points="548.6,57.3 547.7,62.2 544.7,66.2 541.8,70.3 537.3,72.4 533.8,76.0 529.2,78.1"/><polyline points="546.5,60.6 542.6,63.7 538.8,67.0 536.2,71.3 532.2,74.3 530.1,78.8 527.8,83.2 524.8,87.2 521.8,91.2 517.7,94.1"/><polyline points="494.7,68.2 499.7,68.7 504.3,70.8 508.5,73.5 512.0,77.0"/><polyline points="475.9,110.6 480.9,110.2 485.8,111.2 490.8,111.3 495.3,113.4 498.9,117.0 502.9,120.0"/><polyline points="457.0,76.6 452.0,76.2 447.7,73.7 442.8,72.6"/><polyline points="590.0,110.6 585.2,109.1 581.5,105.7 577.9,102.4 576.0,97.7 572.4,94.2 568.1,91.8 563.7,89.3 559.0,87.8 554.7,85.2"/><polyline points="537.6,82.7 539.3,78.0 541.8,73.6 545.9,70.8 550.8,69.7 555.8,69.1 560.5,67.5 564.4,64.4 568.4,61.4"/><polyline points="484.6,80.8 480.3,83.5 475.8,85.6 472.8,89.6 468.3,91.8"/><polyline points="519.8,73.6 519.5,68.7 517.3,64.2 513.7,60.7 511.9,56.0 509.9,51.4 510.0,46.4 511.6,41.7"/><polyline points="480.7,80.5 476.5,83.2 471.6,83.9 466.6,84.6 462.3,87.1 458.1,89.9 455.7,94.3 454.4,99.1 452.2,103.6 448.1,106.5 445.9,110.9"/><polyline points="467.6,44.9 467.2,49.9 466.3,54.8 467.3,59.7 467.2,64.7 468.9,69.4 470.6,74.1 473.3,78.2 477.2,81.4 481.0,84.6"/><polyline points="508.3,71.8 503.8,73.9 499.2,75.8 494.2,75.9 489.2,75.9 484.3,77.2 480.1,79.9 475.8,82.3 471.2,84.4"/><polyline points="464.8,111.7 463.0,107.0 460.4,102.8 457.0,99.0 455.5,94.3 452.7,90.1 452.3,85.2"/><polyline points="573.7,53.9 576.0,58.3 578.8,62.5 581.8,66.5 582.9,71.3 583.8,76.3 583.6,81.3 584.9,86.1 585.6,91.0 584.8,96.0"/><polyline points="458.9,86.2 454.4,88.2 450.9,91.9 447.5,95.5 443.2,98.1"/><polyline points="525.0,82.1 520.0,81.5 515.2,82.8 511.1,85.6 508.1,89.6 506.0,94.2"/><polyline points="542.6,86.9 546.0,90.5 548.4,94.9 551.5,98.8 554.8,102.6 558.0,106.5 561.4,110.1 564.5,114.1 569.0,116.1 573.1,119.0"/><polyline points="567.4,57.4 562.9,59.4 557.9,59.4 552.9,58.9 548.1,60.4 543.1,60.4 538.2,61.3 534.0,64.1 529.2,65.4 524.2,64.8"/><polyline points="576.8,113.5 572.2,111.4 569.2,107.4 567.6,102.7 564.8,98.5 564.0,93.6"/><polyline points="552.9,101.6 553.1,96.6 552.5,91.6 552.0,86.6 550.9,81.8 549.5,77.0 546.6,72.9 542.7,69.8"/></g>
<g fill="none" stroke="#242424" stroke-width="0.55"><polyline points="513.9,148.2 510.3,144.8 506.4,141.7 501.7,140.0"/><polyline points="512.8,121.8 510.7,126.4 508.1,130.6 504.5,134.1 501.9,138.4 499.7,142.9 499.7,147.9 501.2,152.7"/><polyline points="505.9,126.0 510.2,123.4 514.2,120.4 518.3,117.5 523.1,116.2"/><polyline points="525.8,133.8 524.2,138.6 523.3,143.5 523.5,148.5"/><polyline points="517.8,118.4 517.3,123.4 517.2,128.4 516.2,133.3 517.5,138.2"/><polyline points="518.9,130.7 516.0,126.6 511.7,124.1 508.8,120.1 505.5,116.3"/><polyline points="543.4,133.0 548.0,131.1 552.9,130.2 556.9,127.2 560.7,124.0"/><polyline points="525.0,137.2 521.5,133.7 519.1,129.3 516.9,124.8 517.1,119.8 519.4,115.4"/></g>
<g fill="none" stroke="#242424" stroke-width="0.55"><polyline points="720.5,110.2 717.0,113.7 712.7,116.4 708.0,118.1 704.1,121.1 700.9,125.0 698.8,129.6"/><polyline points="731.8,97.2 730.6,92.4 727.4,88.5 722.9,86.4 718.0,85.3 713.1,84.7"/><polyline points="709.8,54.9 705.4,52.4 702.4,48.4 698.3,45.6 693.5,44.0"/><polyline points="733.8,95.3 731.4,99.7 728.0,103.4 723.6,105.7 720.5,109.7 719.2,114.5 716.4,118.7"/><polyline points="709.8,125.5 709.7,130.5 710.2,135.5 712.3,140.0 715.9,143.5 718.1,148.0 719.8,152.7"/><polyline points="718.9,131.6 721.4,135.8 725.5,138.8 728.2,143.0 732.4,145.7 737.4,146.5"/><polyline points="720.0,52.1 720.6,57.0 720.3,62.0 719.9,67.0 718.3,71.7 717.6,76.7 715.0,81.0 713.7,85.8 711.7,90.4 710.6,95.3"/><polyline points="728.7,78.2 723.7,77.9 719.3,75.6 716.2,71.7 712.9,68.0 710.8,63.4 707.9,59.4 704.3,55.9 700.3,52.8"/><polyline points="730.6,138.8 729.1,143.6 729.8,148.5"/><polyline points="692.7,85.4 695.2,89.7 699.0,92.9 701.8,97.1 702.9,101.9 705.0,106.5 709.0,109.5 712.9,112.6 716.7,115.9"/><polyline points="706.0,146.4 702.8,142.6 699.9,138.5 696.3,135.1 692.8,131.5 688.8,128.5 684.2,126.5 679.2,126.4 674.3,127.2 670.3,130.2 665.9,132.5"/><polyline points="674.5,130.5 670.9,134.0 666.6,136.4"/><polyline points="704.0,120.4 702.3,115.7 702.1,110.7 702.8,105.8 705.2,101.4"/><polyline points="722.0,132.4 726.2,129.7 730.5,127.2 735.3,125.6"/><polyline points="717.0,76.2 717.9,81.1 717.5,86.1 719.5,90.7 721.6,95.2 722.2,100.2"/><polyline points="688.9,64.9 686.9,69.5 683.9,73.5 680.6,77.2 678.3,81.7 677.6,86.7 678.0,91.7 680.0,96.2 680.7,101.2"/><polyline points="688.9,102.1 692.4,98.5 695.8,94.9 698.9,91.0 703.4,88.8 708.2,87.3 713.2,87.2 717.7,85.2"/><polyline points="725.8,86.3 725.3,91.3 725.4,96.3 725.4,101.3 725.2,106.3 726.2,111.2"/><polyline points="734.3,113.7 732.9,118.5 729.7,122.3 726.6,126.3 724.7,130.9"/><polyline points="696.2,136.7 692.4,140.0 689.5,144.0 685.3,146.8 681.1,149.4 676.6,151.5 671.6,151.2 666.6,152.0"/><polyline points="668.1,131.1 669.2,126.2 669.7,121.2 670.7,116.3 671.8,111.5 674.7,107.4 678.3,103.9 680.2,99.3 683.2,95.3 686.4,91.4 689.6,87.6"/><polyline points="669.3,63.9 672.7,67.5 674.9,72.0 678.2,75.7 681.4,79.6 684.5,83.5 688.7,86.2 691.8,90.1 695.6,93.4 699.9,95.9"/><polyline points="673.1,76.4 669.1,79.4 666.7,83.8 665.9,88.7"/><polyline points="725.9,119.4 720.9,119.9 715.9,120.6 711.9,123.5 706.9,124.1 702.0,123.3 697.0,123.9"/><polyline points="709.3,74.8 705.0,77.3 700.0,77.7 695.1,76.8 690.2,75.6 685.3,76.5 680.9,78.9 676.8,81.7 674.1,86.0"/><polyline points="688.8,73.0 684.1,74.8 679.1,74.9 674.5,77.1 671.1,80.6 669.3,85.3 666.7,89.6"/><polyline points="724.1,106.8 729.0,107.3 733.2,110.1 737.6,112.6"/></g>
<g fill="none" stroke="#242424" stroke-width="0.55"><polyline points="770.9,70.4 770.8,65.4 771.5,60.5 772.7,55.6 771.5,50.8 769.5,46.2"/><polyline points="818.1,98.5 813.6,96.3 809.2,93.9 804.4,92.5 799.4,92.3 794.5,91.7"/><polyline points="801.3,81.9 800.5,86.8 798.6,91.5 795.0,94.9 791.1,98.1 789.1,102.7 786.4,106.9 782.7,110.2"/><polyline points="799.2,71.6 795.1,74.4 791.4,77.9 787.9,81.4 786.0,86.0"/><polyline points="772.0,55.9 776.5,53.7 781.4,52.8 786.3,53.6 790.5,56.3 794.4,59.4 797.8,63.1 800.2,67.5 803.8,70.9 807.8,74.0"/><polyline points="772.0,78.8 776.6,80.9 781.1,83.0 786.0,84.0 790.8,85.3 795.8,85.8 800.7,87.0 805.5,85.9"/><polyline points="810.9,53.6 814.9,50.5 818.4,46.9 822.9,44.9 827.9,44.9 832.9,45.3"/><polyline points="798.3,103.8 796.1,99.2 794.3,94.6 794.5,89.6 794.7,84.6 795.1,79.6 795.2,74.6 797.2,70.0 798.4,65.2 797.4,60.3 797.5,55.3"/><polyline points="824.9,92.3 821.8,88.4 820.4,83.6 820.9,78.6 820.0,73.7 820.9,68.8 820.5,63.8 822.0,59.0 825.5,55.4 828.9,51.7 830.6,47.0"/><polyline points="825.5,80.0 824.5,75.1 825.9,70.3 828.4,66.0 832.3,62.8"/><polyline points="803.3,81.2 804.8,86.0 805.9,90.9 805.0,95.8 806.1,100.7 805.8,105.7 807.3,110.4"/><polyline points="784.9,63.8 782.9,68.3 781.1,73.0 779.2,77.6 779.1,82.6"/><polyline points="812.2,59.2 808.8,62.9 806.2,67.1 803.5,71.4 799.3,74.1 794.4,74.6 789.4,75.2 784.8,77.3"/><polyline points="788.0,104.9 791.4,101.2 795.8,98.9 800.8,98.5 805.1,95.9 809.6,93.8"/><polyline points="812.6,80.9 807.6,81.5 802.8,80.1 797.9,80.9 793.6,83.6 788.9,85.3"/><polyline points="789.1,103.4 793.6,101.3 797.7,98.4 802.7,97.7 807.6,98.4 812.6,98.6 817.4,97.2 822.4,97.6 827.2,96.1 832.1,95.5"/><polyline points="786.4,91.5 781.6,90.1 776.7,89.2 772.0,87.6 768.2,84.3"/><polyline points="788.4,105.2 784.5,102.0 781.2,98.3 777.7,94.6 773.1,92.7 769.6,89.1"/><polyline points="781.4,103.2 786.4,103.4 790.8,105.7 795.1,108.3 800.1,108.5"/><polyline points="824.4,48.0 828.7,50.6 833.2,52.6"/><polyline points="780.6,95.5 783.4,99.6 785.5,104.1 787.4,108.8 790.3,112.8"/><polyline points="822.0,83.8 821.2,88.7 819.3,93.4 817.1,97.9 813.4,101.3 811.0,105.6"/><polyline points="779.3,45.2 774.3,45.3 769.4,44.3"/><polyline points="805.3,91.7 801.2,88.9 796.2,88.3 791.2,88.6 786.2,88.2"/></g>
<g fill="none" stroke="#242424" stroke-width="0.55"><polyline points="818.7,171.3 814.9,168.1 811.1,164.8 807.0,162.0 802.3,160.3"/><polyline points="817.9,240.3 813.0,239.5 808.0,239.1 803.0,239.4"/><polyline points="817.3,288.7 822.0,290.3 826.2,293.0 829.6,296.7 833.9,299.3"/><polyline points="814.5,184.0 819.1,182.0 822.8,178.7 826.7,175.6 831.7,174.8"/><polyline points="829.0,156.0 831.0,151.4 832.4,146.6 831.5,141.7 830.3,136.9 827.9,132.5 826.9,127.6 827.3,122.6"/><polyline points="824.7,207.7 819.8,207.1 815.4,204.8 810.4,203.9 805.4,203.5"/><polyline points="822.4,177.9 817.5,176.8 812.6,177.5 807.6,177.6 803.2,180.0"/><polyline points="808.5,248.7 808.5,253.7 809.0,258.6 807.6,263.4 804.8,267.5"/><polyline points="830.4,177.2 826.8,173.6 824.0,169.5 822.0,164.9 822.1,159.9 824.0,155.3 824.7,150.4 826.0,145.5 825.3,140.6 824.2,135.7 822.6,131.0"/><polyline points="818.5,255.0 821.5,251.0 824.8,247.2 828.8,244.2 833.0,241.4"/><polyline points="826.2,280.2 823.5,276.0 823.0,271.0 821.8,266.2 821.0,261.2 822.3,256.4 824.9,252.2 828.0,248.3"/><polyline points="821.1,196.9 818.3,201.0 815.6,205.2 813.1,209.6 808.9,212.3 805.1,215.5"/></g>
<g fill="none" stroke="#242424" stroke-width="0.55"><polyline points="785.8,201.8 781.2,199.7 776.3,199.2 771.4,200.2 767.0,202.6 762.2,204.1 758.0,206.8 755.6,211.1"/><polyline points="779.5,211.5 778.1,216.3 775.5,220.6 774.8,225.5 772.7,230.0 769.0,233.4 764.7,236.0 759.9,237.2"/><polyline points="766.9,188.3 771.6,190.0 775.9,192.5 779.7,195.8 781.6,200.4 781.9,205.4 783.8,210.0 785.2,214.8 786.7,219.6 787.8,224.5 789.5,229.2"/><polyline points="767.9,239.9 763.2,238.2 758.3,237.1 753.8,235.0"/><polyline points="794.5,259.1 795.7,254.3 798.4,250.1 801.2,246.0"/><polyline points="772.9,239.2 772.2,234.2 770.3,229.6 769.5,224.6 767.8,219.9 765.4,215.6 764.1,210.7"/><polyline points="792.9,246.3 788.7,243.6 783.8,242.7 779.2,240.6 774.3,239.6 769.4,240.3 764.9,242.4 760.1,244.0"/><polyline points="768.1,232.2 773.1,231.8 777.8,233.5 781.2,237.2 785.6,239.5 789.6,242.5 793.8,245.2 797.6,248.5"/><polyline points="772.9,254.7 777.4,252.7 782.4,253.1 786.9,255.3 791.8,256.0"/><polyline points="771.0,223.1 771.8,218.1 770.2,213.4 768.9,208.6 767.4,203.8 765.4,199.2 762.5,195.1 761.0,190.4"/><polyline points="792.7,202.7 789.2,206.2 787.0,210.7 784.6,215.1 781.4,218.9 779.4,223.5 778.4,228.4 775.8,232.6 773.4,237.0"/><polyline points="792.5,224.5 796.3,221.2 798.7,216.8 802.6,213.7"/><polyline points="769.5,186.5 772.1,190.7 776.3,193.5 781.2,194.2 785.6,196.7 790.3,198.4 795.3,198.0 799.9,196.0"/><polyline points="799.9,196.2 801.2,191.4 801.8,186.4 802.7,181.5"/></g>
<g fill="none" stroke="#262626" stroke-width="0.55"><polyline points="771.9,314.5 767.2,319.6 762.7,325.0 756.7,328.6 750.0,330.8"/><polyline points="754.1,312.0 760.2,315.4 767.2,315.7 774.2,316.4 780.8,314.0"/><polyline points="788.8,405.2 795.8,404.6 802.8,404.2 809.5,405.9 815.5,409.5 820.5,414.4 826.0,418.8"/><polyline points="815.4,397.6 813.5,390.9 814.6,384.0 815.0,377.0 816.9,370.2 817.1,363.2 820.0,356.9 819.6,349.9 819.9,342.9 818.2,336.1 815.8,329.5"/><polyline points="781.2,375.4 784.6,369.3 787.7,363.0 789.6,356.3 788.4,349.4 788.4,342.4 788.9,335.4"/><polyline points="772.9,317.8 774.3,324.6 775.3,331.6 775.1,338.6 777.1,345.3"/><polyline points="760.4,308.6 759.3,315.5 758.9,322.5 761.6,329.0 766.7,333.8 769.1,340.4 769.1,347.4 767.4,354.2"/><polyline points="753.6,312.7 760.6,312.9 766.7,316.3 773.1,319.3 777.4,324.8 783.0,328.9 789.1,332.5 794.2,337.2 800.6,340.1"/><polyline points="773.6,378.0 780.6,378.4 787.2,380.7 793.8,383.1 800.7,382.2 807.7,382.8 814.4,384.6"/><polyline points="818.2,379.7 811.5,381.9 804.5,381.9 797.5,381.8 790.6,382.6 783.6,383.1 777.6,386.6 770.6,387.4 763.6,387.9 756.7,388.8"/><polyline points="774.4,296.0 781.4,296.0 788.4,295.7 794.7,298.8 800.1,303.3 806.2,306.7 811.4,311.4"/></g>
<g fill="none" stroke="#1c1c1c" stroke-width="0.55"><polyline points="74.4,227.1 79.6,231.8 81.9,238.3 86.9,243.3 89.7,249.7"/><polyline points="67.8,240.1 68.2,233.1 65.4,226.7 62.1,220.5 58.7,214.4 58.4,207.4"/><polyline points="45.0,300.8 51.2,297.7 58.2,296.8 65.1,297.9 72.0,299.3"/><polyline points="42.9,283.7 49.6,285.9 54.9,290.5 61.6,292.4 66.6,297.3 72.8,300.6 78.6,304.6 82.4,310.4 84.9,317.0 89.1,322.5"/><polyline points="64.1,261.7 70.8,263.7 76.5,267.9 79.7,274.1 81.9,280.8 86.0,286.5 91.5,290.8"/><polyline points="72.4,230.6 65.4,229.6 58.7,231.4 51.8,230.0 45.1,227.9"/></g>
<g fill="none" stroke="#222" stroke-width="0.55"><polyline points="51.6,419.6 59.2,417.0 67.1,416.2 74.9,418.2 81.8,422.3 89.6,424.1 97.4,422.6 104.7,419.2 111.5,415.0 118.7,411.5"/><polyline points="42.1,413.4 48.6,418.0 54.0,423.9 60.8,428.2 67.2,433.0"/><polyline points="79.3,465.8 76.9,473.5 73.2,480.6 71.4,488.4 70.4,496.3"/><polyline points="108.1,485.0 102.1,479.7 95.9,474.7 88.5,471.6 82.3,466.6 74.4,465.0 66.7,467.2 58.9,468.7 50.9,468.6"/><polyline points="68.7,483.0 61.1,480.4 53.2,481.0 45.8,484.2 38.1,486.2"/><polyline points="84.0,474.2 80.2,481.3 76.6,488.4 70.6,493.7 65.0,499.4"/><polyline points="58.4,456.1 66.3,457.1 74.3,456.6 82.3,456.1 89.5,452.7 97.0,449.8 102.9,444.4 106.1,437.1 109.5,429.8 111.3,422.0 115.1,415.0"/></g>
<g fill="none" stroke="#2a2a2a" stroke-width="0.55"><polyline points="277.3,361.9 280.9,363.6 284.9,364.0 288.7,362.8 291.9,360.4 295.7,359.3"/><polyline points="316.7,367.7 319.1,370.9 321.8,373.9 324.1,377.2 325.1,381.0 324.3,384.9 323.8,388.9 325.3,392.6 327.9,395.7"/><polyline points="317.3,382.7 315.6,379.1 314.3,375.3 312.7,371.7 311.1,368.0 311.0,364.0"/><polyline points="298.0,384.6 298.3,380.6 297.0,376.8 294.8,373.5 291.5,371.2 289.4,367.8 286.7,364.8 284.0,361.9"/><polyline points="305.8,392.6 309.7,393.2 313.1,395.4 317.0,396.1 320.9,397.2 324.9,397.5 328.8,398.1 332.8,397.6"/><polyline points="315.4,360.0 312.9,356.9 309.3,355.2 306.4,352.4 302.6,351.1 298.9,349.7 295.2,348.1"/><polyline points="288.0,349.5 291.9,350.1 295.9,350.2 299.5,352.0 303.0,353.8 306.5,355.8 309.5,358.5"/><polyline points="286.1,373.6 289.1,376.3 290.5,380.0 292.3,383.6 293.9,387.3 295.9,390.7 298.5,393.7 300.8,397.0 302.8,400.5"/><polyline points="294.8,368.6 296.3,364.8 296.7,360.9 297.4,356.9 299.3,353.4"/><polyline points="326.1,377.1 323.9,380.5 321.2,383.4 320.0,387.2 317.1,390.0"/><polyline points="318.2,356.3 317.9,360.3 318.4,364.3 319.8,368.0 319.2,372.0 318.7,376.0 318.6,380.0 320.1,383.7 322.8,386.6 325.9,389.1 328.5,392.2"/><polyline points="303.2,379.4 305.9,382.3 307.8,385.9 310.0,389.2 311.5,392.9 311.2,396.9 309.3,400.4"/><polyline points="290.8,383.9 287.5,386.1 283.7,387.2 279.9,388.6 275.9,388.4 272.1,387.2 268.8,384.9 266.9,381.4"/><polyline points="284.9,389.1 282.6,385.8 279.7,383.0 278.3,379.3 277.1,375.5 277.6,371.5 277.0,367.6 276.0,363.7 275.2,359.8 275.7,355.8"/><polyline points="268.6,391.8 264.7,390.9 261.6,388.5 257.8,387.1"/><polyline points="294.6,363.4 296.8,360.1 297.6,356.1 299.2,352.5 299.6,348.5 300.4,344.6 299.9,340.6 298.9,336.7 296.6,333.5"/><polyline points="284.5,373.4 280.5,373.1 276.6,372.5 272.6,371.9 268.9,370.4 264.9,370.2 261.0,369.2 257.1,368.6"/><polyline points="266.3,366.8 264.4,363.3 262.7,359.7 260.2,356.6"/><polyline points="310.2,363.1 306.5,361.5 302.7,360.2 299.0,358.8 295.1,357.8 291.1,358.3 287.5,360.0 283.7,361.3 279.8,361.9"/><polyline points="295.0,344.8 299.0,344.9 303.0,345.2 307.0,344.8 310.6,343.1 314.6,343.2 318.5,344.3"/><polyline points="316.4,341.3 319.0,338.3 322.5,336.3 326.3,335.3 330.0,333.6"/><polyline points="273.3,345.9 277.3,346.6 281.3,346.7 284.8,348.6 287.9,351.1 291.4,353.0 294.0,356.0"/></g>
<g fill="none" stroke="#2a2a2a" stroke-width="0.55"><polyline points="434.5,350.9 435.8,354.7 435.6,358.7 434.7,362.6 434.6,366.6"/><polyline points="412.9,350.8 416.8,351.8 420.8,351.9 424.8,352.1 428.4,353.8"/><polyline points="360.8,386.6 361.8,382.7 363.9,379.3 364.7,375.4 366.5,371.8 369.0,368.6 371.7,365.7 374.8,363.2 377.4,360.1"/><polyline points="395.5,381.8 392.4,379.3 389.2,376.9 385.7,374.9 382.8,372.2 381.3,368.5 379.8,364.8 378.5,361.0 376.7,357.4"/><polyline points="370.2,392.0 372.6,395.2 375.5,397.9"/><polyline points="463.4,374.9 465.7,378.2 466.2,382.1 466.0,386.1 464.4,389.8 461.9,392.9 459.3,395.9"/><polyline points="408.5,346.1 404.7,345.0 401.6,342.4 399.8,338.8 396.7,336.3 392.9,335.0 388.9,334.9"/><polyline points="430.2,336.8 433.0,333.9 436.7,332.4"/><polyline points="360.1,360.7 361.2,356.8 362.6,353.1 364.6,349.6 367.1,346.5 369.9,343.6 373.6,342.1 376.4,339.3 379.3,336.6"/><polyline points="464.7,336.9 468.2,338.8 470.4,342.2 472.9,345.3"/><polyline points="416.1,366.6 414.6,370.3 412.6,373.7 409.3,376.0 406.2,378.5 404.0,381.8 402.8,385.6 401.8,389.5 401.9,393.5 400.4,397.2"/><polyline points="364.0,375.7 361.0,373.1 357.4,371.2 354.8,368.3 351.3,366.2 347.5,365.2 343.5,364.9 339.5,365.3"/><polyline points="427.6,382.4 424.0,380.7 420.4,379.0 416.7,377.5 412.7,377.8"/><polyline points="412.4,343.3 412.1,339.3 413.6,335.6"/><polyline points="442.7,381.9 441.6,385.8 439.1,388.9 436.5,391.9 432.8,393.5 430.1,396.4 426.3,397.8 422.3,397.6"/><polyline points="395.2,344.5 398.0,347.4 399.2,351.2 398.7,355.2 398.9,359.2 397.3,362.9"/><polyline points="358.4,377.9 361.7,375.6 365.4,374.0 368.5,371.6 372.3,370.3 376.3,370.6"/><polyline points="426.9,357.0 425.0,353.5 424.5,349.6 425.8,345.8 428.0,342.5 430.8,339.6 432.3,335.8"/><polyline points="381.8,369.9 381.0,373.9 380.0,377.7 378.0,381.2 375.9,384.6 372.6,386.8 370.4,390.2 369.2,394.0 369.7,398.0"/><polyline points="380.2,380.6 383.0,377.8 386.8,376.5 390.8,375.8 394.1,373.6 397.4,371.3 401.3,370.5 405.3,370.1 409.2,369.1"/><polyline points="346.7,344.8 347.4,348.7 346.2,352.5 346.9,356.5 347.9,360.4 347.1,364.3 345.8,368.1 346.3,372.0 348.5,375.4 351.2,378.3"/><polyline points="399.8,354.9 403.6,353.5 407.5,352.6 411.4,353.2 415.2,354.4 419.1,355.4"/><polyline points="413.0,390.2 412.6,386.2 412.5,382.2 411.9,378.2 412.2,374.2 411.9,370.2 412.1,366.2 412.8,362.3 411.5,358.5 410.2,354.7"/><polyline points="354.6,379.7 355.4,375.8 354.2,372.0 353.0,368.2 350.9,364.7 349.1,361.1 347.8,357.4 346.4,353.6 343.6,350.8 340.8,347.9"/><polyline points="402.6,373.5 406.6,372.9 409.9,370.6 412.6,367.7 413.8,363.9 415.3,360.2 416.4,356.3"/><polyline points="345.4,346.7 342.5,343.9 339.8,341.0 338.6,337.2 337.3,333.4"/><polyline points="402.7,352.4 404.9,349.1 408.2,346.9 411.9,345.3 415.8,344.4 419.6,343.2 423.1,341.4 426.9,340.1 430.0,337.6"/></g>
<g fill="none" stroke="#2a2a2a" stroke-width="0.55"><polyline points="347.3,492.9 345.5,496.5 345.0,500.5 343.3,504.1 342.4,508.0 342.4,512.0 340.8,515.7"/><polyline points="347.8,481.0 350.2,477.8 353.0,474.9 354.5,471.2 356.8,468.0 357.5,464.0 359.5,460.6"/><polyline points="383.8,498.5 385.9,495.1 387.9,491.7 391.2,489.4 393.7,486.3 396.8,483.8 398.5,480.1 401.4,477.4"/><polyline points="398.5,443.1 396.2,439.9 393.9,436.6 391.0,433.8 387.6,431.7"/><polyline points="343.1,484.8 341.0,481.4 340.4,477.5 341.4,473.6 341.7,469.6"/><polyline points="396.6,481.9 399.8,479.4 401.7,475.9 402.5,472.0"/><polyline points="350.2,513.3 348.1,516.7 347.6,520.7"/><polyline points="359.0,460.7 357.7,464.5 358.1,468.4 358.8,472.4 359.5,476.3 360.6,480.2 361.2,484.1 360.6,488.1"/><polyline points="394.7,470.0 398.6,468.9 402.5,469.7"/><polyline points="349.1,492.0 347.6,488.2 347.3,484.3 345.2,480.8 341.9,478.6 338.0,478.0 334.7,475.7"/><polyline points="396.6,439.4 396.4,443.4 398.0,447.0 399.8,450.6 401.2,454.3"/><polyline points="390.8,519.5 386.9,518.6 382.9,518.1 379.1,516.9 375.5,515.1 372.2,512.9 368.2,512.4 364.4,511.1 360.4,511.2 356.9,513.0 353.4,515.0"/><polyline points="374.7,453.6 378.2,455.5 381.7,457.5 385.3,459.1 389.1,460.4 392.1,463.0 395.7,464.8 398.6,467.5 400.9,470.8"/><polyline points="360.6,465.3 360.8,469.3 359.6,473.1 358.0,476.7 357.9,480.7 356.9,484.6 355.4,488.3 353.7,492.0 351.5,495.3"/><polyline points="377.5,470.5 380.0,467.4 381.1,463.6 381.2,459.6 380.1,455.7 379.5,451.8 379.2,447.8 380.9,444.1"/><polyline points="361.8,441.3 359.7,444.6 357.4,447.9 353.8,449.7 350.6,452.1 346.9,453.8 344.5,456.9 342.3,460.3 339.3,462.9"/><polyline points="348.2,481.4 349.7,485.1 349.4,489.1 348.1,492.8 347.1,496.7 346.1,500.6 346.9,504.5 348.7,508.1"/><polyline points="375.7,426.7 379.6,427.1 383.4,428.6 387.0,430.3 390.9,431.1 394.6,432.7 398.1,434.5 401.6,436.4"/><polyline points="384.6,452.5 383.2,448.8 382.0,444.9 380.9,441.1 379.8,437.2"/><polyline points="341.7,482.5 344.8,480.0 348.6,478.9 352.6,479.7 356.3,481.1 360.3,481.0 363.8,479.1 367.3,477.1 370.9,475.3 374.3,473.3"/><polyline points="388.0,458.0 387.1,461.9 386.1,465.8 385.0,469.6 384.3,473.6 384.0,477.6 382.5,481.3"/></g>
<g fill="none" stroke="#1e1e1e" stroke-width="0.55"><polyline points="600.2,514.2 593.7,511.7 586.7,511.7 580.3,514.5 573.4,515.4 566.4,514.6"/><polyline points="542.3,491.8 541.1,484.9 538.4,478.4 534.7,472.5 531.8,466.1"/><polyline points="558.0,480.9 562.7,475.7 568.3,471.5 571.4,465.3 576.8,460.8 583.2,458.0"/><polyline points="545.0,492.8 542.2,499.3 538.7,505.3 537.5,512.2 533.3,517.8 530.0,524.0"/><polyline points="646.5,504.0 649.1,510.5 652.7,516.5 654.6,523.2"/><polyline points="509.5,492.0 507.3,485.4 502.5,480.3 499.7,473.9 497.2,467.3"/></g>
<g fill="none" stroke-linecap="round" stroke-linejoin="round"><polyline points="6.2,73.5 25.0,81.0 42.5,78.5 53.8,69.8 62.5,63.5 72.5,56.0 75.0,41.0" stroke="#222222" stroke-width="0.6"/><polyline points="53.8,69.8 65.0,91.0 70.0,116.0 75.0,146.0 82.5,175.0" stroke="#222222" stroke-width="0.6"/><polyline points="42.5,78.5 37.5,106.0 45.0,141.0 40.0,175.0" stroke="#222222" stroke-width="0.6"/><polyline points="72.5,56.0 85.0,81.0 88.8,88.5 85.0,116.0 95.0,148.5 100.0,175.0" stroke="#222222" stroke-width="0.6"/><polyline points="88.8,88.5 96.2,83.5" stroke="#222222" stroke-width="0.6"/><polyline points="110.0,66.0 105.0,91.0 100.0,116.0 110.0,146.0 117.5,175.0" stroke="#222222" stroke-width="0.6"/><polyline points="110.0,66.0 117.5,48.5 122.5,41.0" stroke="#222222" stroke-width="0.6"/><polyline points="117.5,48.5 130.0,76.0 127.5,106.0 135.0,136.0 140.0,158.5" stroke="#222222" stroke-width="0.6"/><polyline points="140.0,41.0 150.0,66.0 152.5,91.0 150.0,108.5 160.0,126.0" stroke="#222222" stroke-width="0.6"/><polyline points="162.5,46.0 172.5,71.0 175.0,91.0 170.0,111.0" stroke="#222222" stroke-width="0.6"/><polyline points="175.0,48.5 185.0,68.5 190.0,91.0 187.5,113.5" stroke="#222222" stroke-width="0.6"/><polyline points="6.2,141.0 20.0,146.0 32.5,161.0 50.0,175.0" stroke="#222222" stroke-width="0.6"/><polyline points="50.0,111.0 57.5,136.0 53.8,161.0" stroke="#222222" stroke-width="0.6"/><polyline points="195.0,61.0 215.0,66.0" stroke="#222222" stroke-width="0.6"/><polyline points="197.5,73.5 220.0,78.5" stroke="#222222" stroke-width="0.6"/><polyline points="200.0,86.0 225.0,91.0" stroke="#222222" stroke-width="0.6"/><polyline points="202.5,98.5 230.0,102.2" stroke="#222222" stroke-width="0.6"/><polyline points="160.0,126.0 175.0,123.5 190.0,116.0" stroke="#222222" stroke-width="0.6"/><polyline points="140.0,158.5 160.0,151.0 175.0,141.0 185.0,123.5" stroke="#222222" stroke-width="0.6"/><polyline points="25.0,81.0 22.5,106.0 27.5,131.0 25.0,156.0 30.0,175.0" stroke="#222222" stroke-width="0.6"/><polyline points="65.0,91.0 58.8,103.5 60.0,123.5" stroke="#222222" stroke-width="0.6"/><polyline points="130.0,76.0 140.0,86.0 142.5,103.5" stroke="#222222" stroke-width="0.6"/><polyline points="6.2,56.0 22.5,51.0 35.0,41.0" stroke="#222222" stroke-width="0.6"/><polyline points="95.0,41.0 90.0,56.0 85.0,81.0" stroke="#222222" stroke-width="0.6"/><polyline points="150.0,108.5 140.0,116.0 135.0,136.0" stroke="#222222" stroke-width="0.6"/><polyline points="152.5,136.0 175.0,131.0" stroke="#222222" stroke-width="0.6"/><polyline points="155.0,146.0 180.0,141.0" stroke="#222222" stroke-width="0.6"/><polyline points="117.5,175.0 125.0,158.5 140.0,158.5" stroke="#222222" stroke-width="0.6"/><polyline points="6.2,103.5 15.0,116.0 12.5,136.0 20.0,146.0" stroke="#222222" stroke-width="0.6"/><polyline points="75.0,146.0 62.5,156.0 60.0,175.0" stroke="#222222" stroke-width="0.6"/><polyline points="172.5,71.0 182.5,63.5 190.0,51.0 195.0,41.0" stroke="#222222" stroke-width="0.6"/><polyline points="225.0,41.0 232.5,63.5 240.0,81.0 250.0,91.0" stroke="#222222" stroke-width="0.6"/><polyline points="230.0,102.2 250.0,106.0" stroke="#222222" stroke-width="0.6"/><polyline points="220.0,78.5 240.0,81.0" stroke="#222222" stroke-width="0.6"/><polyline points="105.0,91.0 117.5,98.5 127.5,106.0" stroke="#222222" stroke-width="0.6"/><polyline points="255.0,56.0 282.5,46.0" stroke="#222222" stroke-width="0.6"/><polyline points="258.0,62.2 285.5,52.2" stroke="#222222" stroke-width="0.6"/><polyline points="261.0,68.2 288.5,58.2" stroke="#222222" stroke-width="0.6"/><polyline points="263.8,74.5 291.2,64.5" stroke="#222222" stroke-width="0.6"/><polyline points="266.8,80.5 294.2,70.5" stroke="#222222" stroke-width="0.6"/><polyline points="269.8,86.8 297.2,76.8" stroke="#222222" stroke-width="0.6"/><polyline points="272.8,92.8 300.2,82.8" stroke="#222222" stroke-width="0.6"/><polyline points="275.8,99.0 303.2,89.0" stroke="#222222" stroke-width="0.6"/><polyline points="278.8,105.0 306.2,95.0" stroke="#222222" stroke-width="0.6"/><polyline points="281.5,111.2 309.0,101.2" stroke="#222222" stroke-width="0.6"/><polyline points="284.5,117.2 312.0,107.2" stroke="#222222" stroke-width="0.6"/><polyline points="287.5,123.5 315.0,113.5" stroke="#222222" stroke-width="0.6"/><polyline points="287.5,48.5 310.0,41.0" stroke="#222222" stroke-width="0.6"/><polyline points="291.0,54.8 313.5,47.2" stroke="#222222" stroke-width="0.6"/><polyline points="294.5,61.0 317.0,53.5" stroke="#222222" stroke-width="0.6"/><polyline points="297.8,67.2 320.2,59.8" stroke="#222222" stroke-width="0.6"/><polyline points="301.2,73.5 323.8,66.0" stroke="#222222" stroke-width="0.6"/><polyline points="304.8,79.8 327.2,72.2" stroke="#222222" stroke-width="0.6"/><polyline points="308.0,86.0 330.5,78.5" stroke="#222222" stroke-width="0.6"/><polyline points="311.5,92.2 334.0,84.8" stroke="#222222" stroke-width="0.6"/><polyline points="315.0,98.5 337.5,91.0" stroke="#222222" stroke-width="0.6"/><polyline points="325.0,86.0 340.0,96.0" stroke="#222222" stroke-width="0.6"/><polyline points="330.0,81.0 345.0,91.0" stroke="#222222" stroke-width="0.6"/><polyline points="335.0,76.0 350.0,86.0" stroke="#222222" stroke-width="0.6"/><polyline points="340.0,71.0 355.0,81.0" stroke="#222222" stroke-width="0.6"/><polyline points="345.0,66.0 360.0,76.0" stroke="#222222" stroke-width="0.6"/><polyline points="350.0,61.0 365.0,71.0" stroke="#222222" stroke-width="0.6"/><polyline points="355.0,56.0 370.0,66.0" stroke="#222222" stroke-width="0.6"/><polyline points="332.5,116.0 345.0,121.0" stroke="#222222" stroke-width="0.6"/><polyline points="338.0,111.5 350.5,116.5" stroke="#222222" stroke-width="0.6"/><polyline points="343.8,107.2 356.2,112.2" stroke="#222222" stroke-width="0.6"/><polyline points="349.5,103.0 362.0,108.0" stroke="#222222" stroke-width="0.6"/><polyline points="355.0,98.5 367.5,103.5" stroke="#222222" stroke-width="0.6"/><polyline points="370.0,61.0 392.5,66.0" stroke="#222222" stroke-width="0.6"/><polyline points="370.0,68.5 392.5,73.5" stroke="#222222" stroke-width="0.6"/><polyline points="370.0,76.0 392.5,81.0" stroke="#222222" stroke-width="0.6"/><polyline points="370.0,83.5 392.5,88.5" stroke="#222222" stroke-width="0.6"/><polyline points="370.0,91.0 392.5,96.0" stroke="#222222" stroke-width="0.6"/><polyline points="370.0,98.5 392.5,103.5" stroke="#222222" stroke-width="0.6"/><polyline points="425.0,56.0 415.0,57.2" stroke="#222222" stroke-width="0.6"/><polyline points="425.0,64.5 415.0,65.8" stroke="#222222" stroke-width="0.6"/><polyline points="425.0,73.2 415.0,74.5" stroke="#222222" stroke-width="0.6"/><polyline points="425.0,81.8 415.0,83.0" stroke="#222222" stroke-width="0.6"/><polyline points="425.0,90.2 415.0,91.5" stroke="#222222" stroke-width="0.6"/><polyline points="425.0,98.8 415.0,100.0" stroke="#222222" stroke-width="0.6"/><polyline points="425.0,107.5 415.0,108.8" stroke="#222222" stroke-width="0.6"/><polyline points="425.0,116.0 415.0,117.2" stroke="#222222" stroke-width="0.6"/><polyline points="255.0,56.0 287.5,123.5" stroke="#222222" stroke-width="0.6"/><polyline points="282.5,46.0 315.0,98.5" stroke="#222222" stroke-width="0.6"/><polyline points="250.0,78.5 265.0,106.0 272.5,141.0" stroke="#222222" stroke-width="0.6"/><polyline points="367.5,41.0 400.0,51.0 435.0,48.5" stroke="#222222" stroke-width="0.6"/><polyline points="445.0,51.0 465.0,61.0 475.0,78.5 470.0,98.5 485.0,113.5" stroke="#222222" stroke-width="0.6"/><polyline points="465.0,61.0 490.0,51.0 500.0,56.0" stroke="#222222" stroke-width="0.6"/><polyline points="450.0,86.0 467.5,91.0 475.0,78.5" stroke="#222222" stroke-width="0.6"/><polyline points="455.0,106.0 475.0,103.5 490.0,91.0 500.0,88.5" stroke="#222222" stroke-width="0.6"/><polyline points="475.0,103.5 480.0,123.5" stroke="#222222" stroke-width="0.6"/><polyline points="440.0,66.0 455.0,71.0 460.0,56.0 450.0,41.0" stroke="#222222" stroke-width="0.6"/><polyline points="485.0,41.0 482.5,56.0 500.0,68.5" stroke="#222222" stroke-width="0.6"/><polyline points="462.5,111.0 467.5,133.5" stroke="#222222" stroke-width="0.6"/><polyline points="250.0,56.0 260.0,46.0 265.0,41.0" stroke="#222222" stroke-width="0.6"/><polyline points="400.0,51.0 405.0,66.0" stroke="#222222" stroke-width="0.6"/><polyline points="500.0,49.8 517.5,51.0 535.0,81.0 550.0,118.5 567.5,131.0" stroke="#222222" stroke-width="0.6"/><polyline points="517.5,51.0 520.0,41.0" stroke="#222222" stroke-width="0.6"/><polyline points="535.0,81.0 507.5,71.0 500.0,76.0" stroke="#222222" stroke-width="0.6"/><polyline points="535.0,81.0 557.5,83.5 592.5,71.0" stroke="#222222" stroke-width="0.6"/><polyline points="557.5,53.5 557.5,83.5" stroke="#222222" stroke-width="0.6"/><polyline points="542.5,56.0 547.5,61.0" stroke="#222222" stroke-width="0.6"/><polyline points="500.0,113.5 520.0,123.5 537.5,126.0" stroke="#222222" stroke-width="0.6"/><polyline points="530.0,83.5 532.5,123.5" stroke="#222222" stroke-width="0.6"/><polyline points="500.0,128.5 515.0,136.0 510.0,148.5" stroke="#222222" stroke-width="0.6"/><polyline points="537.5,136.0 535.0,158.5" stroke="#222222" stroke-width="0.6"/><polyline points="550.0,118.5 585.0,116.0" stroke="#222222" stroke-width="0.6"/><polyline points="562.5,123.5 562.5,111.0 585.0,108.5" stroke="#222222" stroke-width="0.6"/><polyline points="575.0,133.5 577.5,158.5" stroke="#222222" stroke-width="0.6"/><polyline points="592.5,101.0 620.0,91.0 640.0,93.5" stroke="#222222" stroke-width="0.6"/><polyline points="620.0,41.0 625.0,91.0 630.0,123.5 625.0,151.0 628.8,158.5" stroke="#222222" stroke-width="0.6"/><polyline points="630.0,56.0 662.5,56.0" stroke="#222222" stroke-width="0.6"/><polyline points="630.0,66.0 660.0,66.0" stroke="#222222" stroke-width="0.6"/><polyline points="625.0,76.0 655.0,76.0" stroke="#222222" stroke-width="0.6"/><polyline points="627.5,86.0 652.5,86.0" stroke="#222222" stroke-width="0.6"/><polyline points="630.0,96.0 655.0,96.0" stroke="#222222" stroke-width="0.6"/><polyline points="630.0,106.0 655.0,108.5" stroke="#222222" stroke-width="0.6"/><polyline points="632.5,116.0 660.0,118.5" stroke="#222222" stroke-width="0.6"/><polyline points="635.0,126.0 660.0,128.5" stroke="#222222" stroke-width="0.6"/><polyline points="635.0,136.0 660.0,138.5" stroke="#222222" stroke-width="0.6"/><polyline points="637.5,146.0 655.0,148.5" stroke="#222222" stroke-width="0.6"/><polyline points="645.0,41.0 650.0,91.0 650.0,123.5 660.0,151.0" stroke="#222222" stroke-width="0.6"/><polyline points="662.5,56.0 662.5,116.0 665.0,151.0" stroke="#222222" stroke-width="0.6"/><polyline points="685.0,66.0 680.0,103.5 675.0,118.5 680.0,141.0 685.0,161.5" stroke="#222222" stroke-width="0.6"/><polyline points="685.0,66.0 700.0,63.5 720.0,73.5 725.0,91.0 735.0,116.0 737.5,136.0" stroke="#222222" stroke-width="0.6"/><polyline points="700.0,86.0 702.5,116.0 695.0,123.5 697.5,141.0" stroke="#222222" stroke-width="0.6"/><polyline points="720.0,51.0 730.0,66.0 750.0,71.0" stroke="#222222" stroke-width="0.6"/><polyline points="725.0,91.0 750.0,86.0" stroke="#222222" stroke-width="0.6"/><polyline points="730.0,103.5 750.0,101.0" stroke="#222222" stroke-width="0.6"/><polyline points="735.0,116.0 750.0,113.5" stroke="#222222" stroke-width="0.6"/><polyline points="672.5,86.0 680.0,103.5" stroke="#222222" stroke-width="0.6"/><polyline points="705.0,148.5 725.0,141.0 735.0,143.5" stroke="#222222" stroke-width="0.6"/><polyline points="600.0,66.0 620.0,68.5" stroke="#222222" stroke-width="0.6"/><polyline points="600.0,81.0 572.5,78.5 562.5,91.0 575.0,101.0" stroke="#222222" stroke-width="0.6"/><polyline points="567.5,73.5 587.5,83.5" stroke="#222222" stroke-width="0.6"/><polyline points="565.0,86.0 585.0,93.5" stroke="#222222" stroke-width="0.6"/><polyline points="595.0,111.0 615.0,103.5" stroke="#222222" stroke-width="0.6"/><polyline points="595.0,121.0 617.5,116.0" stroke="#222222" stroke-width="0.6"/><polyline points="597.5,136.0 615.0,131.0" stroke="#222222" stroke-width="0.6"/><polyline points="600.0,146.0 617.5,143.5" stroke="#222222" stroke-width="0.6"/><polyline points="500.0,91.0 515.0,98.5 527.5,96.0" stroke="#222222" stroke-width="0.6"/><polyline points="505.0,103.5 525.0,111.0" stroke="#222222" stroke-width="0.6"/><polyline points="670.0,71.0 675.0,51.0 690.0,41.0" stroke="#222222" stroke-width="0.6"/><polyline points="700.0,63.5 705.0,46.0" stroke="#222222" stroke-width="0.6"/><polyline points="710.0,123.5 725.0,123.5" stroke="#222222" stroke-width="0.6"/><polyline points="707.5,133.5 730.0,131.0" stroke="#222222" stroke-width="0.6"/><polyline points="740.0,141.0 750.0,148.5" stroke="#222222" stroke-width="0.6"/><polyline points="735.0,151.0 750.0,158.5" stroke="#222222" stroke-width="0.6"/><polyline points="690.0,91.0 700.0,86.0" stroke="#222222" stroke-width="0.6"/><polyline points="665.0,151.0 685.0,151.0" stroke="#222222" stroke-width="0.6"/><polyline points="718.8,46.0 722.5,71.0 732.5,91.0 732.5,121.0 737.5,138.5" stroke="#222222" stroke-width="0.6"/><polyline points="700.0,63.5 715.0,71.0 722.5,71.0" stroke="#222222" stroke-width="0.6"/><polyline points="722.5,71.0 750.0,66.0 775.0,58.5 782.5,41.0" stroke="#222222" stroke-width="0.6"/><polyline points="737.5,56.0 760.0,78.5 768.8,88.5" stroke="#222222" stroke-width="0.6"/><polyline points="750.0,66.0 765.0,81.0" stroke="#222222" stroke-width="0.6"/><polyline points="782.5,41.0 792.5,71.0 782.5,99.8" stroke="#222222" stroke-width="0.6"/><polyline points="792.5,71.0 817.5,63.5 832.8,71.0" stroke="#222222" stroke-width="0.6"/><polyline points="807.5,66.0 817.5,81.0 832.8,86.0" stroke="#222222" stroke-width="0.6"/><polyline points="792.5,71.0 807.5,86.0 825.0,106.0 832.8,108.5" stroke="#222222" stroke-width="0.6"/><polyline points="725.0,91.0 702.5,96.0 700.0,116.0" stroke="#222222" stroke-width="0.6"/><polyline points="702.5,96.0 710.0,121.0 732.5,121.0" stroke="#222222" stroke-width="0.6"/><polyline points="760.0,132.2 767.5,141.0 765.0,156.0" stroke="#222222" stroke-width="0.6"/><polyline points="772.5,116.0 772.5,136.0 785.0,131.0" stroke="#222222" stroke-width="0.6"/><polyline points="782.5,116.0 800.0,126.0 795.0,146.0 785.0,166.0" stroke="#222222" stroke-width="0.6"/><polyline points="808.8,121.0 800.0,151.0" stroke="#222222" stroke-width="0.6"/><polyline points="737.5,146.0 762.5,158.5" stroke="#222222" stroke-width="0.6"/><polyline points="732.5,151.0 782.5,161.0" stroke="#222222" stroke-width="0.6"/><polyline points="730.0,163.5 780.0,168.5" stroke="#222222" stroke-width="0.6"/><polyline points="745.0,46.0 762.5,51.0" stroke="#222222" stroke-width="0.6"/><polyline points="775.0,73.5 795.0,76.0" stroke="#222222" stroke-width="0.6"/><polyline points="772.5,81.0 796.2,82.2" stroke="#222222" stroke-width="0.6"/><polyline points="732.5,78.5 757.5,71.0" stroke="#222222" stroke-width="0.6"/><polyline points="732.5,84.8 760.0,78.5" stroke="#222222" stroke-width="0.6"/><polyline points="733.8,91.0 762.5,86.0" stroke="#222222" stroke-width="0.6"/><polyline points="733.8,98.5 755.0,94.8" stroke="#222222" stroke-width="0.6"/><polyline points="735.0,106.0 753.8,103.5" stroke="#222222" stroke-width="0.6"/><polyline points="735.0,113.5 752.5,112.2" stroke="#222222" stroke-width="0.6"/><polyline points="785.0,121.0 800.0,128.5" stroke="#222222" stroke-width="0.6"/><polyline points="787.5,128.5 797.5,133.5" stroke="#222222" stroke-width="0.6"/><polyline points="787.5,136.0 796.2,139.8" stroke="#222222" stroke-width="0.6"/><polyline points="786.2,143.5 795.0,146.0" stroke="#222222" stroke-width="0.6"/><polyline points="815.0,123.5 832.8,128.5" stroke="#222222" stroke-width="0.6"/><polyline points="817.5,136.0 832.8,141.0" stroke="#222222" stroke-width="0.6"/><polyline points="762.5,91.0 757.5,106.0" stroke="#222222" stroke-width="0.6"/><polyline points="747.5,98.5 752.5,123.5 758.8,132.2" stroke="#222222" stroke-width="0.6"/><polyline points="795.0,41.0 800.0,56.0 817.5,63.5" stroke="#222222" stroke-width="0.6"/><polyline points="97.5,270.0 130.0,267.5 165.0,262.5 192.5,261.2" stroke="#222222" stroke-width="0.6"/><polyline points="37.5,282.5 40.0,309.0" stroke="#222222" stroke-width="0.6"/><polyline points="6.2,190.0 30.0,195.0 62.5,192.5 93.8,197.5" stroke="#222222" stroke-width="0.6"/><polyline points="30.0,175.0 32.5,206.2" stroke="#222222" stroke-width="0.6"/><polyline points="50.0,175.0 52.5,206.2" stroke="#222222" stroke-width="0.6"/><polyline points="72.5,175.0 75.0,206.2" stroke="#222222" stroke-width="0.6"/><polyline points="37.5,207.5 40.0,222.5 57.5,220.0" stroke="#222222" stroke-width="0.6"/><polyline points="75.0,207.5 77.5,225.0" stroke="#222222" stroke-width="0.6"/><polyline points="82.5,235.0 85.0,252.5" stroke="#222222" stroke-width="0.6"/><polyline points="110.0,215.0 125.0,225.0" stroke="#222222" stroke-width="0.6"/><polyline points="140.0,197.5 142.5,225.0" stroke="#222222" stroke-width="0.6"/><polyline points="162.5,200.0 165.0,225.0" stroke="#222222" stroke-width="0.6"/><polyline points="205.0,275.0 225.0,272.5 250.0,275.0" stroke="#222222" stroke-width="0.6"/><polyline points="215.0,275.0 217.5,292.5" stroke="#222222" stroke-width="0.6"/><polyline points="125.0,297.5 140.0,305.0 160.0,285.0" stroke="#222222" stroke-width="0.6"/><polyline points="6.2,225.0 20.0,223.8" stroke="#222222" stroke-width="0.6"/><polyline points="25.0,212.5 35.0,212.5 35.0,225.0" stroke="#222222" stroke-width="0.6"/><polyline points="57.5,210.0 67.5,212.5" stroke="#222222" stroke-width="0.6"/><polyline points="105.0,182.5 120.0,190.0" stroke="#222222" stroke-width="0.6"/><polyline points="140.0,175.0 141.2,192.5" stroke="#222222" stroke-width="0.6"/><polyline points="215.0,200.0 217.5,222.5" stroke="#222222" stroke-width="0.6"/><polyline points="232.5,200.0 235.0,220.0" stroke="#222222" stroke-width="0.6"/><polyline points="220.0,232.5 245.0,235.0" stroke="#222222" stroke-width="0.6"/><polyline points="415.0,175.0 416.2,197.5" stroke="#222222" stroke-width="0.6"/><polyline points="440.0,175.0 442.5,195.0" stroke="#222222" stroke-width="0.6"/><polyline points="470.0,235.0 472.5,262.5" stroke="#222222" stroke-width="0.6"/><polyline points="475.0,217.5 477.5,232.5" stroke="#222222" stroke-width="0.6"/><polyline points="405.0,275.0 420.0,280.0" stroke="#222222" stroke-width="0.6"/><polyline points="435.0,270.0 455.0,275.0 457.5,287.5" stroke="#222222" stroke-width="0.6"/><polyline points="277.5,270.0 295.0,272.5 297.5,285.0" stroke="#222222" stroke-width="0.6"/><polyline points="315.0,265.0 317.5,282.5" stroke="#222222" stroke-width="0.6"/><polyline points="335.0,190.0 345.0,190.0 345.0,200.0" stroke="#222222" stroke-width="0.6"/><polyline points="337.5,232.5 347.5,235.0" stroke="#222222" stroke-width="0.6"/><polyline points="275.0,277.5 285.0,280.0" stroke="#222222" stroke-width="0.6"/><polyline points="390.0,292.5 392.5,309.0" stroke="#222222" stroke-width="0.6"/><polyline points="450.0,290.0 452.5,309.0" stroke="#222222" stroke-width="0.6"/><polyline points="475.0,270.0 490.0,272.5" stroke="#222222" stroke-width="0.6"/><polyline points="751.1,203.6 803.8,203.6 833.0,203.6" stroke="#222222" stroke-width="0.6"/><polyline points="803.8,203.6 803.8,227.0 793.7,237.1" stroke="#222222" stroke-width="0.6"/><polyline points="766.8,173.4 763.5,200.2" stroke="#222222" stroke-width="0.6"/><polyline points="751.1,227.0 766.8,223.7 770.2,213.6" stroke="#222222" stroke-width="0.6"/><polyline points="766.8,253.9 760.1,280.7 753.4,294.2" stroke="#222222" stroke-width="0.6"/><polyline points="760.1,280.7 780.3,274.0" stroke="#222222" stroke-width="0.6"/><polyline points="781.9,247.2 776.9,257.2 787.0,260.6 790.3,250.5 781.9,247.2" stroke="#222222" stroke-width="0.6"/><polyline points="770.2,237.1 793.7,240.5" stroke="#222222" stroke-width="0.6"/><polyline points="807.1,287.4 830.6,287.4" stroke="#222222" stroke-width="0.6"/><polyline points="807.1,292.5 830.6,294.2" stroke="#222222" stroke-width="0.6"/><polyline points="751.1,310.9 763.5,317.7 776.9,304.2" stroke="#222222" stroke-width="0.6"/><polyline points="763.5,317.7 760.1,327.7" stroke="#222222" stroke-width="0.6"/><polyline points="776.9,344.5 807.1,346.2 810.5,337.8" stroke="#222222" stroke-width="0.6"/><polyline points="751.1,180.1 766.8,176.7" stroke="#222222" stroke-width="0.6"/><polyline points="753.4,190.1 765.2,186.8" stroke="#222222" stroke-width="0.6"/><polyline points="820.5,190.1 833.0,191.8" stroke="#222222" stroke-width="0.6"/><polyline points="817.2,203.6 820.5,190.1" stroke="#222222" stroke-width="0.6"/><polyline points="751.1,213.6 760.1,210.3" stroke="#222222" stroke-width="0.6"/><polyline points="765.2,270.7 756.8,270.7 755.1,284.1" stroke="#222222" stroke-width="0.6"/><polyline points="6.2,406.5 57.5,399.5" stroke="#222222" stroke-width="0.6"/><polyline points="6.2,419.0 30.0,421.5 37.5,414.0 45.0,404.0" stroke="#222222" stroke-width="0.6"/><polyline points="200.0,414.0 205.0,421.5 212.5,434.0 205.0,443.0" stroke="#222222" stroke-width="0.6"/><polyline points="6.2,431.5 37.5,426.5" stroke="#222222" stroke-width="0.6"/><polyline points="82.5,404.0 100.0,405.2 110.0,409.0" stroke="#222222" stroke-width="0.6"/><polyline points="40.0,309.0 41.2,326.5" stroke="#222222" stroke-width="0.6"/><polyline points="107.5,354.0 120.0,374.0 125.0,381.5" stroke="#222222" stroke-width="0.6"/><polyline points="125.0,379.0 137.5,366.5" stroke="#222222" stroke-width="0.6"/><polyline points="155.0,374.0 160.0,379.0" stroke="#222222" stroke-width="0.6"/><polyline points="175.0,366.5 180.0,376.5" stroke="#222222" stroke-width="0.6"/><polyline points="215.0,361.5 222.5,366.5" stroke="#222222" stroke-width="0.6"/><polyline points="172.5,324.0 177.5,331.5" stroke="#222222" stroke-width="0.6"/><polyline points="217.5,315.2 222.5,321.5 215.0,321.5" stroke="#222222" stroke-width="0.6"/><polyline points="75.0,443.0 95.0,434.0 110.0,426.5" stroke="#222222" stroke-width="0.6"/><polyline points="62.5,443.0 82.5,434.0" stroke="#222222" stroke-width="0.6"/><polyline points="250.0,349.0 270.0,351.5 280.0,346.5 300.0,349.0" stroke="#222222" stroke-width="0.6"/><polyline points="270.0,351.5 272.5,366.5" stroke="#222222" stroke-width="0.6"/><polyline points="295.0,369.0 332.5,366.5" stroke="#222222" stroke-width="0.6"/><polyline points="300.0,359.0 302.5,379.0" stroke="#222222" stroke-width="0.6"/><polyline points="250.0,376.5 265.0,379.0" stroke="#222222" stroke-width="0.6"/><polyline points="345.0,354.0 380.0,351.5 400.0,359.0" stroke="#222222" stroke-width="0.6"/><polyline points="345.0,369.0 380.0,366.5" stroke="#222222" stroke-width="0.6"/><polyline points="350.0,359.0 352.5,369.0" stroke="#222222" stroke-width="0.6"/><polyline points="365.0,351.5 367.5,366.5" stroke="#222222" stroke-width="0.6"/><polyline points="405.0,351.5 440.0,344.0" stroke="#222222" stroke-width="0.6"/><polyline points="410.0,359.0 445.0,351.5" stroke="#222222" stroke-width="0.6"/><polyline points="425.0,384.0 427.5,394.0 450.0,396.5" stroke="#222222" stroke-width="0.6"/><polyline points="435.0,384.0 437.5,394.0" stroke="#222222" stroke-width="0.6"/><polyline points="250.0,391.5 257.5,396.5 275.0,394.0 307.5,396.5" stroke="#222222" stroke-width="0.6"/><polyline points="275.0,419.0 282.5,443.0" stroke="#222222" stroke-width="0.6"/><polyline points="355.0,409.0 360.0,419.0 357.5,434.0" stroke="#222222" stroke-width="0.6"/><polyline points="385.0,419.0 380.0,434.0" stroke="#222222" stroke-width="0.6"/><polyline points="330.0,426.5 342.5,429.0" stroke="#222222" stroke-width="0.6"/><polyline points="325.0,414.0 332.5,416.5" stroke="#222222" stroke-width="0.6"/><polyline points="320.0,359.0 332.5,360.2" stroke="#222222" stroke-width="0.6"/><polyline points="275.0,334.0 277.5,346.5" stroke="#222222" stroke-width="0.6"/><polyline points="412.5,334.0 415.0,344.0" stroke="#222222" stroke-width="0.6"/><polyline points="460.0,429.0 467.5,443.0" stroke="#222222" stroke-width="0.6"/><polyline points="475.0,419.0 500.0,414.0" stroke="#222222" stroke-width="0.6"/><polyline points="6.0,450.0 30.0,455.0 45.0,462.0 60.0,452.0 85.0,440.0 110.0,432.0" stroke="#222222" stroke-width="0.6"/><polyline points="50.0,462.0 55.0,470.0 62.0,466.0" stroke="#222222" stroke-width="0.6"/><polyline points="275.0,432.0 272.0,445.0 276.0,455.0" stroke="#222222" stroke-width="0.6"/><polyline points="290.0,432.0 286.0,440.0" stroke="#222222" stroke-width="0.6"/><polyline points="330.0,455.0 322.0,470.0 326.0,476.0" stroke="#222222" stroke-width="0.6"/><polyline points="340.0,460.0 352.0,462.0 352.0,474.0 365.0,476.0" stroke="#222222" stroke-width="0.6"/><polyline points="345.0,490.0 362.0,488.0" stroke="#222222" stroke-width="0.6"/><polyline points="345.0,496.0 360.0,495.0" stroke="#222222" stroke-width="0.6"/><polyline points="330.0,500.0 332.0,520.0" stroke="#222222" stroke-width="0.6"/><polyline points="335.0,505.0 345.0,512.0" stroke="#222222" stroke-width="0.6"/><polyline points="318.0,515.0 340.0,518.0" stroke="#222222" stroke-width="0.6"/><polyline points="372.0,446.0 378.0,455.0 395.0,452.0" stroke="#222222" stroke-width="0.6"/><polyline points="378.0,455.0 372.0,470.0 380.0,474.0" stroke="#222222" stroke-width="0.6"/><polyline points="395.0,445.0 396.0,460.0" stroke="#222222" stroke-width="0.6"/><polyline points="380.0,436.0 392.0,440.0" stroke="#222222" stroke-width="0.6"/><polyline points="210.0,430.0 212.0,440.0 205.0,445.0" stroke="#222222" stroke-width="0.6"/><polyline points="6.0,478.0 20.0,476.0" stroke="#222222" stroke-width="0.6"/><polyline points="6.0,484.0 22.0,482.0" stroke="#222222" stroke-width="0.6"/><polyline points="494.0,430.0 480.0,467.0 475.0,526.0" stroke="#222222" stroke-width="0.7"/><polyline points="315.0,41.0 332.5,71.0 337.5,63.5" stroke="#363636" stroke-width="1.15"/><polyline points="175.0,344.0 192.5,330.2 217.5,347.8" stroke="#363636" stroke-width="1.15"/><polyline points="187.5,113.5 192.5,136.0 187.5,175.0" stroke="#363636" stroke-width="1.38"/><polyline points="240.0,141.0 250.0,136.0" stroke="#363636" stroke-width="1.38"/><polyline points="628.8,158.5 627.5,171.5" stroke="#363636" stroke-width="1.38"/><polyline points="680.0,161.5 680.0,171.5" stroke="#363636" stroke-width="1.38"/><polyline points="522.5,161.5 520.0,171.5" stroke="#363636" stroke-width="1.38"/><polyline points="768.8,88.5 781.2,99.8" stroke="#363636" stroke-width="1.38"/><polyline points="165.0,277.5 167.5,271.2 185.0,268.8 198.8,266.2" stroke="#363636" stroke-width="1.38"/><polyline points="360.0,247.5 365.0,250.0 363.8,265.0 357.5,277.5" stroke="#363636" stroke-width="1.38"/><polyline points="377.5,409.0 372.5,443.0" stroke="#363636" stroke-width="1.38"/><polyline points="265.0,309.0 265.0,325.2" stroke="#363636" stroke-width="1.38"/><polyline points="346.0,440.0 365.0,442.5 372.5,430.0" stroke="#363636" stroke-width="1.38"/><polyline points="475.0,430.0 459.0,472.5 462.5,526.0" stroke="#363636" stroke-width="1.38"/><polyline points="321.2,136.0 325.0,175.0" stroke="#363636" stroke-width="1.4949999999999999"/><polyline points="357.5,175.0 357.5,103.5 370.0,102.2" stroke="#363636" stroke-width="1.4949999999999999"/><polyline points="350.0,151.0 357.5,146.0 390.0,143.5" stroke="#363636" stroke-width="1.4949999999999999"/><polyline points="397.5,123.5 400.0,175.0" stroke="#363636" stroke-width="1.4949999999999999"/><polyline points="420.0,121.0 422.5,175.0" stroke="#363636" stroke-width="1.4949999999999999"/><polyline points="437.5,123.5 436.2,175.0" stroke="#363636" stroke-width="1.4949999999999999"/><polyline points="455.0,126.0 452.5,175.0" stroke="#363636" stroke-width="1.4949999999999999"/><polyline points="390.0,122.2 392.5,91.0 400.0,88.5" stroke="#363636" stroke-width="1.4949999999999999"/><polyline points="301.2,175.0 303.8,148.5" stroke="#363636" stroke-width="1.4949999999999999"/><polyline points="302.5,162.5 297.5,177.5" stroke="#363636" stroke-width="1.4949999999999999"/><polyline points="347.5,175.0 350.0,207.5" stroke="#363636" stroke-width="1.4949999999999999"/><polyline points="325.0,175.0 326.2,210.0" stroke="#363636" stroke-width="1.4949999999999999"/><polyline points="400.0,200.0 405.0,235.0" stroke="#363636" stroke-width="1.4949999999999999"/><polyline points="420.0,196.2 425.0,220.0" stroke="#363636" stroke-width="1.4949999999999999"/><polyline points="432.5,195.0 435.0,233.8 432.5,265.0" stroke="#363636" stroke-width="1.4949999999999999"/><polyline points="467.5,195.0 467.5,265.0" stroke="#363636" stroke-width="1.4949999999999999"/><polyline points="377.5,265.0 377.5,291.2" stroke="#363636" stroke-width="1.4949999999999999"/><polyline points="397.5,265.0 397.5,288.8" stroke="#363636" stroke-width="1.4949999999999999"/><polyline points="250.0,250.0 273.8,250.0" stroke="#363636" stroke-width="1.4949999999999999"/><polyline points="290.0,185.0 325.0,185.0 367.5,183.8" stroke="#363636" stroke-width="1.4949999999999999"/><polyline points="302.5,217.5 303.8,260.0" stroke="#363636" stroke-width="1.4949999999999999"/><polyline points="332.5,223.8 335.0,261.2" stroke="#363636" stroke-width="1.4949999999999999"/><polyline points="250.0,200.0 287.5,196.2" stroke="#363636" stroke-width="1.4949999999999999"/><polyline points="385.0,185.0 425.0,180.0 500.0,177.5" stroke="#363636" stroke-width="1.4949999999999999"/><polyline points="450.0,192.5 450.0,265.0" stroke="#363636" stroke-width="1.4949999999999999"/><polyline points="322.5,345.2 365.0,342.8 375.0,335.2 442.5,334.0" stroke="#363636" stroke-width="1.4949999999999999"/><polyline points="400.0,367.8 415.0,371.5 437.5,381.5 470.0,389.0" stroke="#363636" stroke-width="1.4949999999999999"/><polyline points="346.0,430.0 346.0,440.0 337.5,454.0 327.5,495.0 315.0,526.0" stroke="#363636" stroke-width="1.4949999999999999"/><polyline points="145.0,155.0 143.8,167.5" stroke="#363636" stroke-width="1.4949999999999999"/><polyline points="187.5,155.0 190.0,226.2" stroke="#363636" stroke-width="1.4949999999999999"/><polyline points="102.5,193.8 187.5,192.5 250.0,200.0" stroke="#363636" stroke-width="1.4949999999999999"/><polyline points="193.8,226.2 197.5,257.5" stroke="#363636" stroke-width="1.4949999999999999"/><polyline points="325.0,172.5 326.2,210.0" stroke="#363636" stroke-width="1.4949999999999999"/><polyline points="302.5,162.5 297.5,177.5" stroke="#363636" stroke-width="1.4949999999999999"/><polyline points="290.0,185.0 340.0,183.8" stroke="#363636" stroke-width="1.4949999999999999"/><polyline points="142.5,193.8 143.8,227.5" stroke="#363636" stroke-width="1.4949999999999999"/><polyline points="222.5,197.5 223.8,222.5" stroke="#363636" stroke-width="1.4949999999999999"/><polyline points="305.0,212.5 306.2,260.0" stroke="#363636" stroke-width="1.4949999999999999"/><polyline points="300.0,192.5 322.0,187.0 348.5,183.7 381.5,184.8" stroke="#363636" stroke-width="1.4949999999999999"/><polyline points="350.7,154.0 357.3,147.4 388.1,144.1" stroke="#363636" stroke-width="1.4949999999999999"/><polyline points="358.4,103.3 370.5,102.2 388.1,101.1" stroke="#363636" stroke-width="1.4949999999999999"/><polyline points="300.0,150.7 322.0,148.5 344.1,152.9" stroke="#363636" stroke-width="1.4949999999999999"/><polyline points="467.4,130.8 463.0,144.1" stroke="#363636" stroke-width="1.4949999999999999"/><polyline points="430.0,174.9 432.2,196.9" stroke="#363636" stroke-width="1.4949999999999999"/><polyline points="377.1,150.7 381.5,184.8 383.7,203.5" stroke="#363636" stroke-width="1.4949999999999999"/><polyline points="450.9,163.9 454.2,192.5" stroke="#363636" stroke-width="1.4949999999999999"/><polyline points="142.5,167.2 147.5,154.8 250.0,151.0" stroke="#363636" stroke-width="1.6099999999999999"/><polyline points="726.2,158.5 723.8,171.8" stroke="#404040" stroke-width="1.6099999999999999"/><polyline points="16.2,207.5 20.0,241.2" stroke="#363636" stroke-width="1.6099999999999999"/><polyline points="190.0,175.0 190.0,225.0" stroke="#363636" stroke-width="1.6099999999999999"/><polyline points="195.0,225.0 197.5,257.5" stroke="#363636" stroke-width="1.6099999999999999"/><polyline points="150.0,309.0 175.0,296.2 220.0,297.5" stroke="#363636" stroke-width="1.6099999999999999"/><polyline points="372.5,228.8 405.0,222.5 432.5,218.8 500.0,216.2" stroke="#363636" stroke-width="1.6099999999999999"/><polyline points="402.5,238.8 435.0,233.8 500.0,233.8" stroke="#363636" stroke-width="1.6099999999999999"/><polyline points="751.1,328.4 833.0,329.4" stroke="#404040" stroke-width="1.6099999999999999"/><polyline points="66.2,325.2 75.0,316.5 80.0,309.0" stroke="#363636" stroke-width="1.6099999999999999"/><polyline points="190.0,309.0 207.5,329.0 240.0,309.0" stroke="#404040" stroke-width="1.6099999999999999"/><polyline points="358.4,103.3 361.7,150.7 366.1,170.5 370.5,218.1" stroke="#363636" stroke-width="1.6099999999999999"/><polyline points="344.1,152.9 347.4,172.7 352.9,210.1" stroke="#363636" stroke-width="1.6099999999999999"/><polyline points="362.5,53.5 400.0,67.2 417.5,78.5 422.5,91.0 421.2,121.0" stroke="#363636" stroke-width="1.7249999999999999"/><polyline points="332.5,171.0 390.0,166.0 452.5,162.2 500.0,158.5" stroke="#363636" stroke-width="1.7249999999999999"/><polyline points="250.0,309.0 267.5,305.0 300.0,295.0 327.5,280.0 350.0,273.8" stroke="#404040" stroke-width="1.7249999999999999"/><polyline points="250.0,305.5 267.5,301.5 298.8,291.5 325.0,277.0 348.8,271.0" stroke="#404040" stroke-width="1.7249999999999999"/><polyline points="300.0,174.9 333.0,171.6 392.5,170.5 421.1,166.1 452.0,162.8" stroke="#404040" stroke-width="1.7249999999999999"/><polyline points="606.2,41.0 600.0,66.0 586.2,108.5 591.2,123.5 592.5,158.5" stroke="#404040" stroke-width="1.8399999999999999"/><polyline points="725.0,158.5 735.0,143.5 750.0,136.0" stroke="#404040" stroke-width="1.8399999999999999"/><polyline points="726.2,158.5 736.2,142.2 758.8,132.2 781.2,99.8 808.8,121.0 832.8,116.0" stroke="#404040" stroke-width="1.8399999999999999"/><polyline points="100.0,194.5 130.0,193.0 250.0,198.8" stroke="#404040" stroke-width="1.8399999999999999"/><polyline points="197.5,255.5 250.0,256.5" stroke="#404040" stroke-width="1.8399999999999999"/><polyline points="197.5,258.5 250.0,259.5" stroke="#404040" stroke-width="1.8399999999999999"/><polyline points="80.0,309.0 87.5,297.5 105.0,291.2 165.0,277.5 220.0,297.5 250.0,300.0" stroke="#404040" stroke-width="1.8399999999999999"/><polyline points="275.0,233.0 325.0,226.2 367.5,212.5" stroke="#404040" stroke-width="1.8399999999999999"/><polyline points="492.5,175.0 490.0,192.5 493.8,265.0 495.0,309.0" stroke="#404040" stroke-width="1.8399999999999999"/><polyline points="360.0,291.2 420.0,287.5 500.0,287.5" stroke="#404040" stroke-width="1.8399999999999999"/><polyline points="135.0,414.0 155.0,409.0 175.0,411.0 225.0,411.5 250.0,416.5" stroke="#303030" stroke-width="1.6"/><polyline points="140.0,396.5 150.0,395.2 170.0,396.5 185.0,389.5" stroke="#303030" stroke-width="1.6"/><polyline points="250.0,415.2 275.0,416.5 310.0,409.0" stroke="#303030" stroke-width="1.6"/><polyline points="325.0,402.8 375.0,402.8 420.0,411.5 475.0,419.0 500.0,422.8" stroke="#404040" stroke-width="1.8399999999999999"/><polyline points="362.5,41.0 362.5,53.5 370.0,103.5 375.0,123.5 376.2,175.0" stroke="#404040" stroke-width="2.07"/><polyline points="437.5,41.0 436.2,78.5 450.0,118.5 455.0,126.0" stroke="#404040" stroke-width="2.07"/><polyline points="250.0,123.5 275.0,143.5 300.0,175.0" stroke="#404040" stroke-width="2.07"/><polyline points="500.0,151.0 515.0,159.8 525.0,161.5 615.0,158.0 640.0,159.8 685.0,161.5 692.5,157.2 725.0,158.5" stroke="#404040" stroke-width="2.07"/><polyline points="6.2,207.5 93.8,206.2" stroke="#404040" stroke-width="2.07"/><polyline points="370.0,175.0 368.8,207.5 357.5,247.5 350.0,275.0 345.0,309.0" stroke="#404040" stroke-width="2.07"/><polyline points="382.5,200.0 395.0,225.0 410.0,257.5 422.5,285.0 430.0,309.0" stroke="#404040" stroke-width="2.07"/><polyline points="297.5,177.5 273.8,216.2 273.8,260.0 267.5,287.5 265.0,309.0" stroke="#404040" stroke-width="2.07"/><polyline points="751.1,238.8 790.3,265.6 833.0,285.8" stroke="#404040" stroke-width="2.07"/><polyline points="6.2,331.5 66.2,325.2 107.5,322.8" stroke="#404040" stroke-width="2.07"/><polyline points="102.5,309.0 111.2,330.2 142.5,319.0 160.0,309.0" stroke="#404040" stroke-width="2.07"/><polyline points="142.5,319.0 190.0,362.8" stroke="#404040" stroke-width="2.07"/><polyline points="111.2,330.2 107.5,334.0 106.2,351.5 111.2,369.0 135.0,389.0" stroke="#404040" stroke-width="2.07"/><polyline points="340.0,309.0 335.0,324.5 333.8,346.5 341.2,386.5 345.0,414.0 346.2,443.0" stroke="#404040" stroke-width="2.07"/><polyline points="427.5,309.0 432.5,320.2 452.5,356.5 470.0,394.0 475.0,419.0 470.0,443.0" stroke="#404040" stroke-width="2.07"/><polyline points="207.5,41.0 220.0,56.0 222.5,73.5 240.0,106.0 250.0,121.0" stroke="#404040" stroke-width="2.3"/><polyline points="250.0,163.5 282.5,148.5 317.5,131.0 320.0,103.5 337.5,63.5 362.5,53.5" stroke="#404040" stroke-width="2.3"/><polyline points="250.0,220.0 275.0,217.5 325.0,210.0 370.0,206.2 425.0,196.2 500.0,192.5" stroke="#404040" stroke-width="2.3"/><polyline points="250.0,332.8 190.0,362.8 150.0,384.0 135.0,389.0" stroke="#404040" stroke-width="2.3"/><polyline points="135.0,414.0 125.0,426.5 110.0,443.0" stroke="#404040" stroke-width="2.3"/><polyline points="250.0,327.8 265.0,325.2 335.0,324.5 375.0,322.8 432.5,320.2" stroke="#404040" stroke-width="2.3"/><polyline points="125.0,430.0 110.0,442.5 62.5,480.0 6.0,504.0" stroke="#404040" stroke-width="2.3"/><polyline points="250.0,165.0 253.8,170.0 255.0,257.5" stroke="#404040" stroke-width="2.3"/><polyline points="120.0,175.0 150.0,168.5 250.0,163.5" stroke="#404040" stroke-width="2.53"/><polyline points="120.0,175.0 100.0,178.8 94.5,187.5 94.5,280.0 102.5,309.0" stroke="#404040" stroke-width="2.53"/><polyline points="317.5,131.0 350.0,127.2 390.0,122.2 425.0,119.8 450.0,123.5 467.5,133.5 485.0,143.5 500.0,151.0" stroke="#404040" stroke-width="2.76"/><polyline points="6.2,243.0 93.8,233.8 190.0,225.0 250.0,220.0" stroke="#404040" stroke-width="2.76"/><polyline points="250.0,258.8 300.0,261.2 375.0,265.0 500.0,265.0" stroke="#404040" stroke-width="2.76"/><polyline points="57.5,399.5 87.5,399.0 105.0,409.0 122.5,413.5 135.0,409.0" stroke="#303030" stroke-width="2.4"/><polyline points="140.0,396.5 160.0,402.0 185.0,389.5 207.5,385.2 217.5,401.5 230.0,409.0 250.0,406.5" stroke="#303030" stroke-width="2.4"/><polyline points="135.0,389.0 135.0,414.0" stroke="#404040" stroke-width="3.6799999999999997"/><polyline points="250.0,407.8 275.0,411.5 307.5,396.5 335.0,384.0 355.0,386.5 390.0,399.0 425.0,407.8 457.5,407.8 475.0,399.0 485.0,400.2 500.0,394.0" stroke="#303030" stroke-width="4.5"/></g>
<g stroke="#000" stroke-opacity="0.45" stroke-width="0.5"><circle cx="155.4" cy="146.4" r="5.95" fill="#37a4b8"/><circle cx="164" cy="155.8" r="4.55" fill="#4a9b4f"/><circle cx="192.4" cy="153" r="5.95" fill="#f8d32d"/><circle cx="204" cy="136.6" r="8.75" fill="#f8d32d"/><circle cx="197.8" cy="137.2" r="1.05" fill="#a17e06"/><circle cx="164" cy="176" r="9.15" fill="#ee870f"/><circle cx="180.4" cy="178.8" r="5.75" fill="#37a4b8"/><circle cx="197" cy="184.4" r="3.15" fill="#a17e06"/><circle cx="112.8" cy="180" r="2.55" fill="#ee870f"/><circle cx="129" cy="178.2" r="4.55" fill="#a17e06"/><circle cx="129.4" cy="189.8" r="6.75" fill="#a17e06"/><circle cx="141.4" cy="194.6" r="4.75" fill="#f8d32d"/><circle cx="102" cy="193.4" r="3.75" fill="#84cc7e"/><circle cx="110" cy="207.2" r="7.35" fill="#93a525"/><circle cx="131.2" cy="201" r="7.15" fill="#93a525"/><circle cx="130.4" cy="207" r="6.35" fill="#84cc7e"/><circle cx="134" cy="216.4" r="8.55" fill="#9bdbe6"/><circle cx="136" cy="221" r="6.15" fill="#a17e06"/><circle cx="149.2" cy="214.2" r="4.35" fill="#93a525"/><circle cx="155.2" cy="212" r="2.35" fill="#37a4b8"/><circle cx="158.2" cy="220.2" r="2.75" fill="#93a525"/><circle cx="166.6" cy="204" r="5.75" fill="#ee870f"/><circle cx="176.8" cy="203" r="4.95" fill="#93a525"/><circle cx="167.8" cy="211" r="4.15" fill="#4a9b4f"/><circle cx="184.2" cy="216.8" r="9.35" fill="#93a525"/><circle cx="183.8" cy="221" r="4.95" fill="#fcc168"/><circle cx="198.6" cy="221" r="2.55" fill="#fcc168"/><circle cx="130" cy="233.8" r="5.15" fill="#fcc168"/><circle cx="162.4" cy="239.4" r="6.15" fill="#84cc7e"/><circle cx="156" cy="239" r="7.55" fill="#4a9b4f"/><circle cx="168.6" cy="232.6" r="3.55" fill="#a17e06"/><circle cx="49.2" cy="227.6" r="5.75" fill="#37a4b8"/><circle cx="41" cy="233.8" r="6.75" fill="#9bdbe6"/><circle cx="40" cy="234.2" r="2.75" fill="#f8d32d"/><circle cx="357" cy="70.8" r="5.15" fill="#4a9b4f"/><circle cx="379.4" cy="92" r="6.15" fill="#ee870f"/><circle cx="382" cy="83.6" r="7.15" fill="#37a4b8"/><circle cx="401.2" cy="83.6" r="5.15" fill="#4a9b4f"/><circle cx="396.5" cy="90.5" r="4.75" fill="#a17e06"/><circle cx="396.2" cy="86.9" r="7.45" fill="#fcc168"/><circle cx="399" cy="100.6" r="2.65" fill="#ee870f"/><circle cx="384" cy="113" r="5.15" fill="#84cc7e"/><circle cx="382.8" cy="109.4" r="6.55" fill="#fcc168"/><circle cx="353.2" cy="124" r="6.35" fill="#37a4b8"/><circle cx="369.2" cy="123.4" r="6.55" fill="#ee870f"/><circle cx="378" cy="131.6" r="6.95" fill="#37a4b8"/><circle cx="373.8" cy="137.6" r="6.15" fill="#f8d32d"/><circle cx="346.8" cy="133.6" r="5.55" fill="#fcc168"/><circle cx="322.8" cy="137.8" r="6.55" fill="#9bdbe6"/><circle cx="307.5" cy="145" r="7.55" fill="#84cc7e"/><circle cx="309.8" cy="147" r="7.95" fill="#fcc168"/><circle cx="320.2" cy="145.8" r="3.75" fill="#a17e06"/><circle cx="332" cy="145" r="2.85" fill="#93a525"/><circle cx="382" cy="147.4" r="5.85" fill="#f8d32d"/><circle cx="426.4" cy="72.8" r="5.75" fill="#f8d32d"/><circle cx="428.4" cy="83.2" r="5.75" fill="#ee870f"/><circle cx="403.4" cy="101.4" r="3.55" fill="#84cc7e"/><circle cx="430.8" cy="99" r="5.15" fill="#93a525"/><circle cx="414.6" cy="109" r="2.95" fill="#37a4b8"/><circle cx="432.4" cy="113" r="5.15" fill="#37a4b8"/><circle cx="441.8" cy="118.2" r="8.15" fill="#f8d32d"/><circle cx="411.4" cy="126.4" r="4.95" fill="#a17e06"/><circle cx="412.8" cy="142.4" r="3.85" fill="#84cc7e"/><circle cx="462.2" cy="133.8" r="5.35" fill="#9bdbe6"/><circle cx="486.6" cy="125.6" r="6.95" fill="#4a9b4f"/><circle cx="473.6" cy="140.6" r="3.65" fill="#c3cf41"/><circle cx="496.2" cy="140.4" r="2.85" fill="#a17e06"/><circle cx="488.6" cy="147.6" r="6.35" fill="#f8d32d"/><circle cx="524.4" cy="148.8" r="4.45" fill="#37a4b8"/><circle cx="760.6" cy="121.9" r="4.95" fill="#c3cf41"/><circle cx="652" cy="157.9" r="7.35" fill="#37a4b8"/><circle cx="644.9" cy="163.2" r="6.15" fill="#84cc7e"/><circle cx="672.2" cy="165.1" r="3.55" fill="#ee870f"/><circle cx="700.1" cy="164.8" r="4.95" fill="#4a9b4f"/><circle cx="224.6" cy="156.4" r="5.95" fill="#c3cf41"/><circle cx="239.8" cy="169" r="4.35" fill="#9bdbe6"/><circle cx="222" cy="170.4" r="2.15" fill="#fcc168"/><circle cx="241.8" cy="176.2" r="4.55" fill="#ee870f"/><circle cx="220" cy="185" r="7.15" fill="#ee870f"/><circle cx="219.2" cy="177.6" r="6.55" fill="#37a4b8"/><circle cx="212.4" cy="183" r="3.15" fill="#c3cf41"/><circle cx="204" cy="190" r="5.55" fill="#4a9b4f"/><circle cx="228.2" cy="189" r="7.35" fill="#f8d32d"/><circle cx="246.2" cy="188.6" r="6.35" fill="#fcc168"/><circle cx="221" cy="202.4" r="7.75" fill="#a17e06"/><circle cx="226.6" cy="201.4" r="6.55" fill="#c3cf41"/><circle cx="211.8" cy="210.8" r="2.75" fill="#f8d32d"/><circle cx="235.2" cy="212" r="9.15" fill="#f8d32d"/><circle cx="242.8" cy="216.6" r="6.35" fill="#ee870f"/><circle cx="235.6" cy="225.6" r="4.15" fill="#f8d32d"/><circle cx="225" cy="230" r="4.55" fill="#a17e06"/><circle cx="220" cy="230" r="5.55" fill="#37a4b8"/><circle cx="204.8" cy="230.4" r="2.55" fill="#ee870f"/><circle cx="239" cy="230" r="3.15" fill="#37a4b8"/><circle cx="238" cy="241" r="9.15" fill="#93a525"/><circle cx="248.8" cy="231" r="8.15" fill="#fcc168"/><circle cx="228" cy="240" r="5.15" fill="#c3cf41"/><circle cx="205" cy="244" r="6.65" fill="#fcc168"/><circle cx="200" cy="238" r="2.55" fill="#c3cf41"/><circle cx="314" cy="154.4" r="7.35" fill="#a17e06"/><circle cx="313.4" cy="163" r="5.55" fill="#a17e06"/><circle cx="343.4" cy="156.4" r="5.75" fill="#93a525"/><circle cx="339" cy="170" r="4.35" fill="#9bdbe6"/><circle cx="361" cy="162.4" r="3.95" fill="#84cc7e"/><circle cx="390.8" cy="153.4" r="7.35" fill="#4a9b4f"/><circle cx="387.8" cy="174" r="5.35" fill="#c3cf41"/><circle cx="308" cy="192.4" r="6.75" fill="#93a525"/><circle cx="312.4" cy="198.6" r="5.95" fill="#fcc168"/><circle cx="324.4" cy="193.2" r="4.95" fill="#4a9b4f"/><circle cx="304.4" cy="203.6" r="4.55" fill="#9bdbe6"/><circle cx="296.4" cy="208" r="7.55" fill="#37a4b8"/><circle cx="284" cy="209.2" r="2.15" fill="#93a525"/><circle cx="310" cy="215" r="5.35" fill="#4a9b4f"/><circle cx="314.2" cy="215.2" r="4.75" fill="#c3cf41"/><circle cx="321.4" cy="222.4" r="5.55" fill="#37a4b8"/><circle cx="279" cy="231" r="6.15" fill="#f8d32d"/><circle cx="276" cy="229" r="7.55" fill="#37a4b8"/><circle cx="281" cy="221" r="6.95" fill="#9bdbe6"/><circle cx="282.8" cy="238" r="2.55" fill="#f8d32d"/><circle cx="356.4" cy="231.4" r="1.35" fill="#f8d32d"/><circle cx="457.8" cy="156.8" r="6.95" fill="#93a525"/><circle cx="470" cy="154.6" r="2.15" fill="#37a4b8"/><circle cx="474.4" cy="156.4" r="5.55" fill="#4a9b4f"/><circle cx="481" cy="165" r="7.35" fill="#a17e06"/><circle cx="494" cy="164" r="6.15" fill="#fcc168"/><circle cx="519.2" cy="149.6" r="1.35" fill="#f8d32d"/><circle cx="522.8" cy="156.2" r="5.75" fill="#9bdbe6"/><circle cx="510.8" cy="166" r="5.15" fill="#9bdbe6"/><circle cx="511" cy="169.6" r="3.55" fill="#c3cf41"/><circle cx="534.8" cy="173.8" r="6.15" fill="#4a9b4f"/><circle cx="496.4" cy="175" r="5.55" fill="#37a4b8"/><circle cx="500" cy="185" r="4.15" fill="#84cc7e"/><circle cx="456.6" cy="177.2" r="5.35" fill="#84cc7e"/><circle cx="477" cy="179" r="5.15" fill="#c3cf41"/><circle cx="481" cy="183.8" r="8.35" fill="#ee870f"/><circle cx="414.6" cy="177.6" r="2.95" fill="#c3cf41"/><circle cx="420.4" cy="189.6" r="4.15" fill="#f8d32d"/><circle cx="435.4" cy="188.6" r="6.95" fill="#c3cf41"/><circle cx="439.2" cy="188.8" r="4.15" fill="#ee870f"/><circle cx="460.2" cy="197.4" r="5.75" fill="#37a4b8"/><circle cx="468.4" cy="205.8" r="4.75" fill="#4a9b4f"/><circle cx="461.4" cy="207.2" r="2.55" fill="#c3cf41"/><circle cx="450.2" cy="210" r="4.15" fill="#84cc7e"/><circle cx="459" cy="219" r="3.75" fill="#84cc7e"/><circle cx="453.8" cy="217.6" r="5.95" fill="#ee870f"/><circle cx="458.2" cy="214.6" r="1.75" fill="#a17e06"/><circle cx="417.4" cy="212.2" r="2.55" fill="#93a525"/><circle cx="458.4" cy="231" r="5.35" fill="#84cc7e"/><circle cx="435.4" cy="238.6" r="5.55" fill="#9bdbe6"/><circle cx="454.6" cy="248" r="5.15" fill="#a17e06"/><circle cx="499.4" cy="218.4" r="3.15" fill="#f8d32d"/><circle cx="27" cy="245" r="5.55" fill="#fcc168"/><circle cx="33.2" cy="245.4" r="7.15" fill="#ee870f"/><circle cx="182.4" cy="243" r="5.75" fill="#a17e06"/><circle cx="191.8" cy="253.6" r="5.75" fill="#37a4b8"/><circle cx="87.6" cy="313.2" r="5.55" fill="#9bdbe6"/><circle cx="120.4" cy="335.6" r="2.95" fill="#4a9b4f"/><circle cx="219.4" cy="250.4" r="6.35" fill="#84cc7e"/><circle cx="240" cy="251.6" r="1.55" fill="#f8d32d"/><circle cx="258.8" cy="249.8" r="5.15" fill="#9bdbe6"/><circle cx="306.8" cy="246" r="3.35" fill="#4a9b4f"/><circle cx="320.4" cy="245" r="8.15" fill="#fcc168"/><circle cx="318.6" cy="251.6" r="6.15" fill="#37a4b8"/><circle cx="344" cy="243.6" r="3.35" fill="#37a4b8"/><circle cx="306.4" cy="277.8" r="7.95" fill="#93a525"/><circle cx="226" cy="303" r="2.55" fill="#c3cf41"/><circle cx="232" cy="299.6" r="6.75" fill="#9bdbe6"/><circle cx="252" cy="297.4" r="6.55" fill="#a17e06"/><circle cx="245" cy="303.4" r="4.55" fill="#fcc168"/><circle cx="320.6" cy="301.6" r="4.75" fill="#c3cf41"/><circle cx="284.8" cy="310.8" r="4.95" fill="#fcc168"/><circle cx="289.4" cy="316" r="3.55" fill="#37a4b8"/><circle cx="308.4" cy="311.6" r="3.55" fill="#84cc7e"/><circle cx="312" cy="317.2" r="3.55" fill="#fcc168"/><circle cx="318.4" cy="321.8" r="7.75" fill="#93a525"/><circle cx="294.8" cy="335" r="1.75" fill="#ee870f"/><circle cx="312.4" cy="340" r="9.55" fill="#84cc7e"/><circle cx="224.2" cy="335.6" r="4.55" fill="#f8d32d"/><circle cx="349" cy="287" r="5.15" fill="#f8d32d"/><circle cx="354" cy="286" r="5.15" fill="#93a525"/><circle cx="346" cy="291" r="4.55" fill="#4a9b4f"/><circle cx="350" cy="290" r="5.15" fill="#37a4b8"/><circle cx="354.4" cy="289.4" r="6.15" fill="#84cc7e"/><circle cx="392" cy="312.6" r="7.35" fill="#84cc7e"/><circle cx="387.8" cy="313.5" r="5.15" fill="#37a4b8"/><circle cx="376.4" cy="320.6" r="3.55" fill="#9bdbe6"/><circle cx="388.5" cy="332.3" r="5.55" fill="#c3cf41"/><circle cx="399.6" cy="341.5" r="4.95" fill="#9bdbe6"/><circle cx="439.3" cy="251.6" r="4.55" fill="#84cc7e"/><circle cx="454.9" cy="248" r="5.15" fill="#a17e06"/><circle cx="450.5" cy="248" r="1.75" fill="#84cc7e"/><circle cx="458.3" cy="255.8" r="7.75" fill="#ee870f"/><circle cx="478.3" cy="259.4" r="6.55" fill="#9bdbe6"/><circle cx="420.9" cy="260.2" r="5.35" fill="#c3cf41"/><circle cx="451.3" cy="271.8" r="4.35" fill="#fcc168"/><circle cx="485" cy="273.2" r="2.55" fill="#4a9b4f"/><circle cx="434.5" cy="287.6" r="4.15" fill="#a17e06"/><circle cx="408.2" cy="295" r="3.75" fill="#4a9b4f"/><circle cx="471.9" cy="296.2" r="9.55" fill="#93a525"/><circle cx="458.5" cy="303.4" r="6.15" fill="#a17e06"/><circle cx="463.3" cy="295" r="4.55" fill="#f8d32d"/><circle cx="462.5" cy="290.6" r="4.55" fill="#ee870f"/><circle cx="482.7" cy="297" r="3.55" fill="#4a9b4f"/><circle cx="489" cy="292.4" r="5.95" fill="#c3cf41"/><circle cx="433.3" cy="312.4" r="2.75" fill="#84cc7e"/><circle cx="274.8" cy="370.8" r="5.95" fill="#fcc168"/><circle cx="284.6" cy="380.4" r="3.15" fill="#ee870f"/><circle cx="284.6" cy="376.4" r="4.55" fill="#c3cf41"/><circle cx="291" cy="385" r="5.35" fill="#ee870f"/><circle cx="313" cy="367.4" r="3.35" fill="#4a9b4f"/><circle cx="318.2" cy="400.2" r="7.95" fill="#93a525"/><circle cx="346" cy="399.8" r="4.95" fill="#f8d32d"/><circle cx="368" cy="353.2" r="4.15" fill="#4a9b4f"/><circle cx="379.4" cy="355.6" r="5.75" fill="#93a525"/><circle cx="395.2" cy="355.3" r="6.65" fill="#4a9b4f"/><circle cx="388.1" cy="363.2" r="5.35" fill="#93a525"/><circle cx="404" cy="377.2" r="5.75" fill="#93a525"/><circle cx="414.8" cy="383.2" r="7.35" fill="#4a9b4f"/><circle cx="453.7" cy="366.8" r="5.95" fill="#ee870f"/><circle cx="399.5" cy="424.2" r="5.15" fill="#93a525"/><circle cx="353.3" cy="433.8" r="2.85" fill="#9bdbe6"/><circle cx="397" cy="438.5" r="2.75" fill="#ee870f"/><circle cx="83.8" cy="449" r="5.15" fill="#ee870f"/><circle cx="65" cy="474.5" r="3.95" fill="#a17e06"/><circle cx="66.5" cy="470" r="5.95" fill="#9bdbe6"/><circle cx="335.2" cy="483.8" r="3.65" fill="#84cc7e"/><circle cx="344.5" cy="482.5" r="5.15" fill="#f8d32d"/><circle cx="800.8" cy="280.2" r="6.15" fill="#ee870f"/></g><circle cx="486.6" cy="156.8" r="9.1" fill="#f8d32d" stroke="#fff" stroke-width="0.8" stroke-opacity="0.85"/>
</svg>
<div class="ctl" style="top:7.3px;height:20.2px"><svg width="21.4" height="20.2" viewBox="0 0 21.4 20.2"><circle cx="11.6" cy="9.2" r="3.2" fill="none" stroke="#444" stroke-width="1"/><path d="M9.3 11.6L6.3 14.6" stroke="#444" stroke-width="1.2" fill="none"/></svg></div>
<div class="ctl" style="top:38.4px;height:79.2px"><svg width="21.4" height="79.2" viewBox="0 0 21.4 79.2"><path d="M6.6 11.9h8.2M10.7 7.8v8.2M6.9 28.2h7.6" stroke="#444" stroke-width="1.4" fill="none"/><path d="M5.6 45.6L10.7 40.6L15.8 45.6M7 44.6V50.2H14.4V44.6M9.7 50.2V46.6H11.7V50.2" stroke="#444" stroke-width="0.9" fill="none" stroke-linejoin="round"/><path d="M3 55.8H18.4" stroke="#c2c2c2" stroke-width="0.6"/><path d="M8.8 63.6L13.4 67.1L8.8 70.6Z" fill="#555"/></svg></div>
<div id="attr">© 2019 Mapbox &nbsp;© OpenStreetMap</div>
</div>
<div id="tip" class="abs">
<div class="r" style="top:10.1px">Industry:<b>Services</b></div>
<div class="r" style="top:20.9px">Terminal ID:<b>10019</b></div>
<div class="r" style="top:31.6px">Transaction amount:<b>14,562,767</b></div>
<svg class="abs" style="left:0;top:0" width="251" height="285" viewBox="0 0 251 285"><rect x="10" y="42" width="231" height="231.2" fill="#f4f4f4"/><rect x="10" y="89.0" width="231" height="0.7" fill="#ececec"/><rect x="10" y="136.0" width="231" height="0.7" fill="#ececec"/><rect x="10" y="183.0" width="231" height="0.7" fill="#ececec"/><rect x="10" y="230.0" width="231" height="0.7" fill="#ececec"/><rect x="19.60" y="184.2" width="7.8" height="89.0" fill="#f5d328"/><rect x="31.55" y="94.9" width="7.8" height="178.3" fill="#f5d328"/><rect x="43.50" y="52.8" width="7.8" height="220.4" fill="#f5d328"/><rect x="55.45" y="80.6" width="7.8" height="192.6" fill="#f5d328"/><rect x="67.40" y="202.1" width="7.8" height="71.1" fill="#f5d328"/><rect x="79.35" y="153.1" width="7.8" height="120.1" fill="#f5d328"/><rect x="91.30" y="142.9" width="7.8" height="130.3" fill="#f5d328"/><rect x="103.25" y="168.0" width="7.8" height="105.2" fill="#f5d328"/><rect x="115.20" y="165.9" width="7.8" height="107.3" fill="#f5d328"/><rect x="127.15" y="211.3" width="7.8" height="61.9" fill="#f5d328"/><rect x="139.10" y="136.1" width="7.8" height="137.1" fill="#f5d328"/><rect x="151.05" y="215.8" width="7.8" height="57.4" fill="#f5d328"/><rect x="163.00" y="125.1" width="7.8" height="148.1" fill="#f5d328"/><rect x="174.95" y="205.1" width="7.8" height="68.1" fill="#f5d328"/><rect x="186.90" y="171.0" width="7.8" height="102.2" fill="#f5d328"/><rect x="198.85" y="191.3" width="7.8" height="81.9" fill="#f5d328"/><rect x="210.80" y="140.5" width="7.8" height="132.7" fill="#f5d328"/><rect x="222.75" y="189.8" width="7.8" height="83.4" fill="#f5d328"/></svg>
</div>
<div class="abs lbl" style="left:840px;top:39.5px;font-size:8.3px">Industry</div>
<div class="sw" style="top:53.3px;background:#4a9b4f"></div><div class="lt" style="top:53.3px">Electronics sales</div><div class="sw" style="top:68.7px;background:#84cc7e"></div><div class="lt" style="top:68.7px">Entertainment</div><div class="sw" style="top:84.2px;background:#ee870f"></div><div class="lt" style="top:84.2px">Food and catering</div><div class="sw" style="top:99.6px;background:#fcc168"></div><div class="lt" style="top:99.6px">Fuel station</div><div class="sw" style="top:115.0px;background:#37a4b8"></div><div class="lt" style="top:115.0px">Hospitals</div><div class="sw" style="top:130.4px;background:#9bdbe6"></div><div class="lt" style="top:130.4px">IT and communication</div><div class="sw" style="top:145.9px;background:#93a525"></div><div class="lt" style="top:145.9px">Other services</div><div class="sw" style="top:161.3px;background:#c3cf41"></div><div class="lt" style="top:161.3px">Pharmacies</div><div class="sw" style="top:176.7px;background:#a17e06"></div><div class="lt" style="top:176.7px">Retails and supermarkets</div><div class="sw" style="top:192.2px;background:#f8d32d"></div><div class="lt" style="top:192.2px">Services</div>
<div class="abs lbl" style="left:840.4px;top:210.3px;font-size:8.7px">TOP</div>
<div class="inp" style="top:211.4px">10</div>
<div class="abs" style="left:911.5px;top:398px;width:1px;height:126px;background:#ececec"></div><div class="abs" style="left:955px;top:398px;width:1px;height:126px;background:#ececec"></div><div class="abs lbl" style="left:840px;top:375.3px;font-size:8.5px">BOTTOM</div>
<div class="inp" style="top:376px">10</div>
<div class="bl" style="top:237.5px">10263</div><div class="bar" style="top:237.1px;height:9.8px;width:77.4px;background:#93a525"></div><div class="bv" style="top:238.0px;left:950.0px">15,121.3K</div><div class="bl" style="top:250.6px">10138</div><div class="bar" style="top:250.2px;height:9.8px;width:73.2px;background:#93a525"></div><div class="bv" style="top:251.1px;left:945.8px">14,683.9K</div><div class="bl" style="top:263.7px">10135</div><div class="bar" style="top:263.3px;height:9.8px;width:71.6px;background:#93a525"></div><div class="bv" style="top:264.2px;left:944.2px">14,574.4K</div><div class="bl" style="top:276.8px">10019</div><div class="bar" style="top:276.4px;height:9.8px;width:71.6px;background:#f8d32d"></div><div class="bv" style="top:277.3px;left:944.2px">14,562.8K</div><div class="bl" style="top:289.9px">10032</div><div class="bar" style="top:289.5px;height:9.8px;width:71.0px;background:#84cc7e"></div><div class="bv" style="top:290.4px;left:943.6px">14,527.3K</div><div class="bl" style="top:303.0px">10095</div><div class="bar" style="top:302.6px;height:9.8px;width:60.9px;background:#f8d32d"></div><div class="bv" style="top:303.5px;left:933.5px">13,599.6K</div><div class="bl" style="top:316.1px">10178</div><div class="bar" style="top:315.7px;height:9.8px;width:59.9px;background:#ee870f"></div><div class="bv" style="top:316.6px;left:932.5px">13,548.7K</div><div class="bl" style="top:329.2px">10191</div><div class="bar" style="top:328.8px;height:9.8px;width:57.1px;background:#f8d32d"></div><div class="bv" style="top:329.7px;left:929.7px">13,253.6K</div><div class="bl" style="top:342.3px">10171</div><div class="bar" style="top:341.9px;height:9.8px;width:56.4px;background:#a17e06"></div><div class="bv" style="top:342.8px;left:929.0px">13,165.7K</div><div class="bl" style="top:355.4px">10285</div><div class="bar" style="top:355.0px;height:9.8px;width:51.6px;background:#93a525"></div><div class="bv" style="top:355.9px;left:924.2px">12,774.0K</div><div class="bl" style="top:400.8px">10127</div><div class="bar" style="top:401.8px;height:8.9px;width:85.9px;background:#ee870f"></div><div class="bv" style="top:401.8px;left:957.8px">399.3K</div><div class="bl" style="top:413.1px">10173</div><div class="bar" style="top:414.1px;height:8.9px;width:78.3px;background:#84cc7e"></div><div class="bv" style="top:414.1px;left:950.2px">363.2K</div><div class="bl" style="top:425.4px">10179</div><div class="bar" style="top:426.4px;height:8.9px;width:66.6px;background:#f8d32d"></div><div class="bv" style="top:426.4px;left:938.5px">309.0K</div><div class="bl" style="top:437.7px">10240</div><div class="bar" style="top:438.7px;height:8.9px;width:57.4px;background:#c3cf41"></div><div class="bv" style="top:438.7px;left:929.3px">267.4K</div><div class="bl" style="top:450.0px">10025</div><div class="bar" style="top:451.0px;height:8.9px;width:53.6px;background:#ee870f"></div><div class="bv" style="top:451.0px;left:925.5px">249.2K</div><div class="bl" style="top:462.3px">10070</div><div class="bar" style="top:463.3px;height:8.9px;width:48.2px;background:#a17e06"></div><div class="bv" style="top:463.3px;left:920.1px">226.5K</div><div class="bl" style="top:474.6px">10018</div><div class="bar" style="top:475.6px;height:8.9px;width:42.8px;background:#c3cf41"></div><div class="bv" style="top:475.6px;left:914.7px">199.7K</div><div class="bl" style="top:486.9px">10300</div><div class="bar" style="top:487.9px;height:8.9px;width:28.2px;background:#fcc168"></div><div class="bv" style="top:487.9px;left:900.1px">134.6K</div><div class="bl" style="top:499.2px">10169</div><div class="bar" style="top:500.2px;height:8.9px;width:20.3px;background:#a17e06"></div><div class="bv" style="top:500.2px;left:892.2px">99.6K</div><div class="bl" style="top:511.5px">10156</div><div class="bar" style="top:512.5px;height:8.9px;width:14.2px;background:#93a525"></div><div class="bv" style="top:512.5px;left:886.1px">72.1K</div>
</body></html>
